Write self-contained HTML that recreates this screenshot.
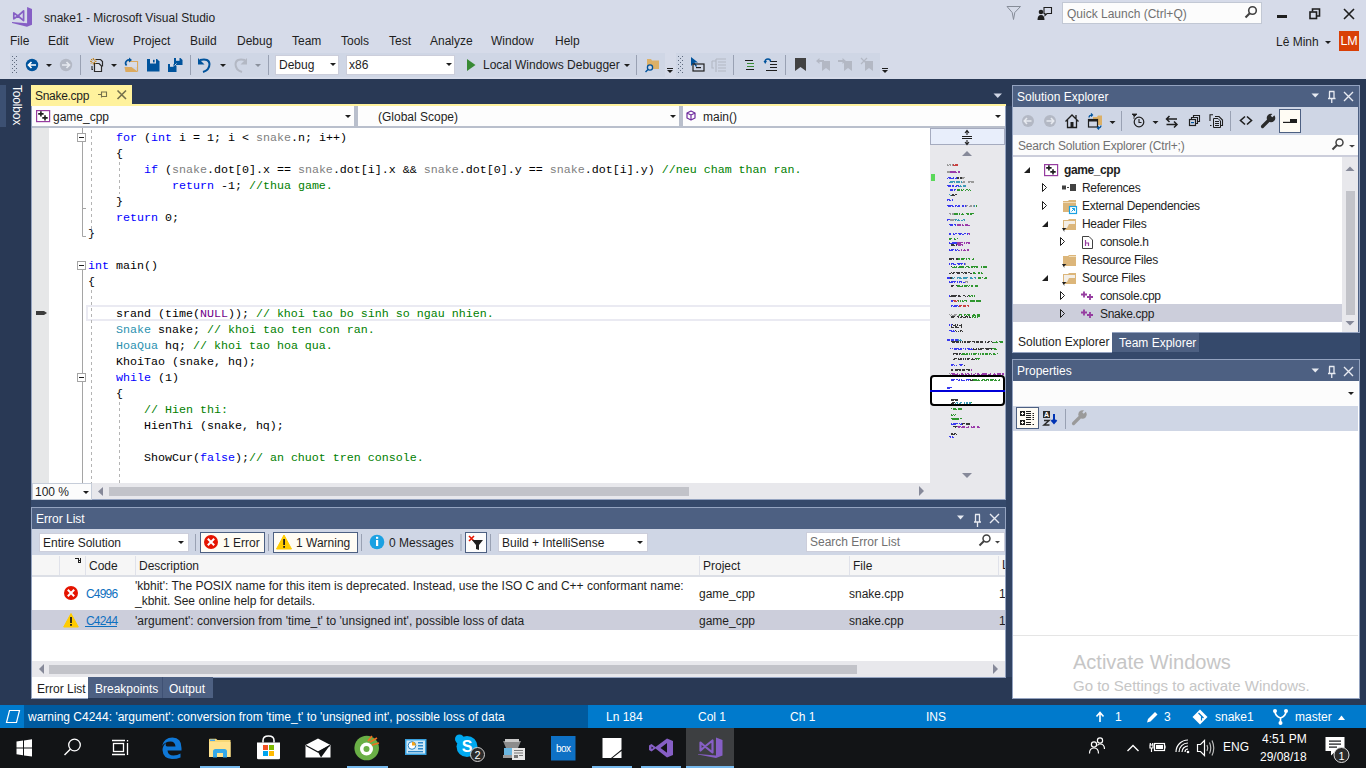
<!DOCTYPE html>
<html><head><meta charset="utf-8">
<style>
*{margin:0;padding:0;box-sizing:border-box}
html,body{width:1366px;height:768px;overflow:hidden}
body{position:relative;background:#293955;font-family:"Liberation Sans",sans-serif;font-size:12px;color:#1e1e1e}
.a{position:absolute}
.t{position:absolute;white-space:pre;line-height:1}
.mono{font-family:"Liberation Mono",monospace;font-size:11.667px}
svg{position:absolute;overflow:visible}
</style></head><body>
<!-- top chrome -->
<div class="a" id="chrome" style="left:0;top:0;width:1366px;height:79px;background:#d6dbe9"></div>
<div class="a" style="left:10px;top:53px;width:655px;height:24px;background:#cfd6e5"></div>
<div class="a" style="left:676px;top:53px;width:204px;height:24px;background:#cfd6e5"></div>


<!-- ===== TITLE ===== -->
<svg style="left:6px;top:2px" width="30" height="30" viewBox="0 0 30 30">
<path d="M21.1 4.9 L26 7.1 L26 22.8 L21 24.8 L6 20.9 L6 20.1 L21.1 21.3 Z" fill="#865fc5"/>
<path d="M7.8 10.9 L12 14 L17.6 8.9 L17.6 18.6 L12 14 L7.8 16.8 Z" fill="none" stroke="#865fc5" stroke-width="1.7" stroke-linejoin="round"/>
</svg>
<div class="t" style="left:44px;top:12px;font-size:12px;color:#1e1e1e">snake1 - Microsoft Visual Studio</div>
<!-- filter/feedback -->
<svg style="left:1006px;top:5px" width="16" height="16" viewBox="0 0 16 16"><path d="M1 1.5 H14.5 L8.8 7.5 L7.5 14.5 L6.2 7.5 Z" fill="none" stroke="#868c98" stroke-width="1"/></svg>
<svg style="left:1037px;top:6px" width="16" height="16" viewBox="0 0 16 16"><circle cx="4" cy="6" r="2.3" fill="#1e1e1e"/><path d="M0.5 14 Q0.5 9 4 9 Q7.5 9 7.5 14 Z" fill="#1e1e1e"/><path d="M7 1.5 H14.5 V7.5 H10 L8 9.5 V7.5 H7 Z" fill="none" stroke="#1e1e1e" stroke-width="1.1"/></svg>
<div class="a" style="left:1062px;top:2px;width:200px;height:22px;background:#fcfcfc;border:1px solid #c2c8d4"></div>
<div class="t" style="left:1067px;top:8px;color:#717171">Quick Launch (Ctrl+Q)</div>
<svg style="left:1244px;top:5px" width="14" height="14" viewBox="0 0 14 14"><circle cx="8.5" cy="5.5" r="3.8" fill="none" stroke="#424242" stroke-width="1.6"/><path d="M6 8 L1.5 12.5" stroke="#424242" stroke-width="2.2"/></svg>
<div class="a" style="left:1277px;top:15px;width:10px;height:3px;background:#1e1e1e"></div>
<svg style="left:1309px;top:8px" width="12" height="12" viewBox="0 0 12 12"><rect x="1" y="4" width="6.5" height="6.5" fill="none" stroke="#1e1e1e" stroke-width="1.6"/><path d="M3.5 3.5 V1 H10.5 V8 H8" fill="none" stroke="#1e1e1e" stroke-width="1.6"/></svg>
<svg style="left:1343px;top:8px" width="12" height="12" viewBox="0 0 12 12"><path d="M1 1 L11 11 M11 1 L1 11" stroke="#1e1e1e" stroke-width="1.6"/></svg>

<!-- ===== MENU ===== -->
<div class="t" style="left:10px;top:35px">File</div>
<div class="t" style="left:48px;top:35px">Edit</div>
<div class="t" style="left:88px;top:35px">View</div>
<div class="t" style="left:133px;top:35px">Project</div>
<div class="t" style="left:190px;top:35px">Build</div>
<div class="t" style="left:237px;top:35px">Debug</div>
<div class="t" style="left:292px;top:35px">Team</div>
<div class="t" style="left:341px;top:35px">Tools</div>
<div class="t" style="left:389px;top:35px">Test</div>
<div class="t" style="left:430px;top:35px">Analyze</div>
<div class="t" style="left:491px;top:35px">Window</div>
<div class="t" style="left:555px;top:35px">Help</div>
<div class="t" style="left:1276px;top:36px">Lê Minh</div>
<svg style="left:1325px;top:41px" width="6" height="4" viewBox="0 0 6 4"><path d="M0 0 H6 L3 3 Z" fill="#1e1e1e"/></svg>
<div class="a" style="left:1339px;top:31px;width:20px;height:20px;background:#d93f06"></div>
<div class="t" style="left:1339px;top:35px;width:20px;text-align:center;color:#fff;font-size:12.5px;letter-spacing:-0.3px">LM</div>

<!-- ===== TOOLBAR ===== -->
<svg style="left:0;top:0" width="1366" height="80" viewBox="0 0 1366 80">
<g fill="#5e6a7e">
<rect x="12" y="56" width="1" height="1"/><rect x="16" y="56" width="1" height="1"/><rect x="14" y="58" width="1" height="1"/>
<rect x="12" y="60" width="1" height="1"/><rect x="16" y="60" width="1" height="1"/><rect x="14" y="62" width="1" height="1"/>
<rect x="12" y="64" width="1" height="1"/><rect x="16" y="64" width="1" height="1"/><rect x="14" y="66" width="1" height="1"/>
<rect x="12" y="68" width="1" height="1"/><rect x="16" y="68" width="1" height="1"/><rect x="14" y="70" width="1" height="1"/>
<rect x="12" y="72" width="1" height="1"/><rect x="16" y="72" width="1" height="1"/>
</g>
<g fill="#5e6a7e">
<rect x="678" y="56" width="1" height="1"/><rect x="682" y="56" width="1" height="1"/><rect x="680" y="58" width="1" height="1"/>
<rect x="678" y="60" width="1" height="1"/><rect x="682" y="60" width="1" height="1"/><rect x="680" y="62" width="1" height="1"/>
<rect x="678" y="64" width="1" height="1"/><rect x="682" y="64" width="1" height="1"/><rect x="680" y="66" width="1" height="1"/>
<rect x="678" y="68" width="1" height="1"/><rect x="682" y="68" width="1" height="1"/><rect x="680" y="70" width="1" height="1"/>
<rect x="678" y="72" width="1" height="1"/><rect x="682" y="72" width="1" height="1"/>
</g>
<!-- back -->
<circle cx="32" cy="65" r="6.2" fill="#00539c"/>
<path d="M28.5 65 H36 M31.5 62 L28.5 65 L31.5 68" fill="none" stroke="#fff" stroke-width="1.7"/>
<path d="M46 64 H52 L49 67 Z" fill="#1e1e1e"/>
<circle cx="66" cy="65" r="6.2" fill="#b3b8c4"/>
<path d="M62 65 H69.5 M66.5 62 L69.5 65 L66.5 68" fill="none" stroke="#e6e9ef" stroke-width="1.7"/>
<rect x="80" y="55" width="1" height="20" fill="#99a1b3"/>
<!-- new project -->
<path d="M95.5 59.5 H100.5 L102.5 61.5 V66.5" fill="none" stroke="#2a2a2a" stroke-width="1.2"/>
<path d="M94.5 63.5 H99 L101.5 66 V71.5 H94.5 Z" fill="#dfe2ea" stroke="#2a2a2a" stroke-width="1.2"/>
<path d="M92 66 V69.5 H93" fill="none" stroke="#2a2a2a" stroke-width="1.1"/>
<g stroke="#c27d0e" stroke-width="1"><path d="M93.3 58 V64.5 M90 61.3 H96.5 M91 59 L95.6 63.6 M95.6 59 L91 63.6"/></g>
<circle cx="93.3" cy="61.3" r="1.3" fill="#cfd6e5"/>
<path d="M111 64 H117 L114 67 Z" fill="#1e1e1e"/>
<!-- open -->
<path d="M128.5 61.5 H137.5 V71.5" fill="none" stroke="#dcaa5e" stroke-width="1.2"/>
<rect x="128" y="62" width="9" height="5" fill="#d8dbe6"/>
<path d="M124.5 67 H131.5 L137.5 71.5 V72 H125.5 Z" fill="#dcaa5e"/>
<path d="M126.5 65.5 Q124.5 63 126.5 61 Q128 59.5 130 60" fill="none" stroke="#00539c" stroke-width="1.6"/>
<path d="M129 57.5 L132 60 L129 62.5 Z" fill="#00539c"/>
<!-- save -->
<path d="M147 59 H157 L159.5 61.5 V71.5 H147 Z" fill="#00539c"/>
<rect x="150" y="59" width="6" height="4.5" fill="#d8dbe6"/><rect x="153" y="59.8" width="1.6" height="2.6" fill="#00539c"/>
<!-- save all -->
<path d="M174 58 H180.5 L182.5 60 V65 H174 Z" fill="#00539c"/>
<rect x="176" y="58" width="3.5" height="2.8" fill="#d8dbe6"/>
<path d="M168 64 H174.5 L176.5 66 V72 H168 Z" fill="#00539c"/>
<rect x="170" y="64" width="3.5" height="2.8" fill="#d8dbe6"/>
<path d="M174.5 65.5 L176.5 63.5" stroke="#cfd6e5" stroke-width="1"/>
<rect x="190" y="55" width="1" height="20" fill="#99a1b3"/>
<!-- undo -->
<path d="M200 60 Q209 58 209.5 64 Q209.5 70 203 72" fill="none" stroke="#00539c" stroke-width="2"/>
<path d="M198 58 V64.5 H204.5 Z" fill="#00539c"/>
<path d="M220 64 H226 L223 67 Z" fill="#1e1e1e"/>
<path d="M245 60 Q236 58 235.5 64 Q235.5 70 242 72" fill="none" stroke="#b3b8c4" stroke-width="2"/>
<path d="M247 58 V64.5 H240.5 Z" fill="#b3b8c4"/>
<path d="M255 64 H261 L258 67 Z" fill="#8a909c"/>
<rect x="268" y="55" width="1" height="20" fill="#99a1b3"/>
<!-- play -->
<path d="M467 59 L475.5 65 L467 71 Z" fill="#388a34"/>
<path d="M624 64 H630 L627 67 Z" fill="#1e1e1e"/>
<rect x="636" y="55" width="1" height="20" fill="#99a1b3"/>
<!-- find in files -->
<path d="M647 59 H651 L652 60.5 H659 V69 H647 Z" fill="#dcb067"/>
<circle cx="650" cy="67.5" r="2.6" fill="#cfd6e5" stroke="#00539c" stroke-width="1.3"/>
<path d="M648 69.5 L645.5 72" stroke="#00539c" stroke-width="1.5"/>
<rect x="665" y="53" width="11" height="24" fill="#d6dbe9"/>
<rect x="667" y="68" width="6" height="1" fill="#1e1e1e"/><path d="M667 70 H673 L670 73 Z" fill="#1e1e1e"/>
<!-- step/breakpoint icons toolbar 2 -->
<path d="M691 57 L691 66 L693.5 63.5 L696 67 L697 66 L694.5 62.5 L698 62.5 Z" fill="#00539c"/>
<rect x="693" y="64" width="11" height="7" fill="none" stroke="#1e1e1e" stroke-width="1.2"/>
<rect x="696" y="67" width="5" height="1.2" fill="#1e1e1e"/>
<g fill="none" stroke="#b3b8c4" stroke-width="1.1"><path d="M712 61 H716 M712 61 V68 H714 M716 59 H726 M718 62 H726 M718 65 H726 M718 68 H726 M718 71 H726 M716 59 V72"/></g>
<rect x="733" y="55" width="1" height="20" fill="#99a1b3"/>
<!-- comment -->
<g stroke="#1e1e1e" stroke-width="1"><path d="M745 60.5 H753 M746 69.5 H754"/></g>
<g stroke="#388a34" stroke-width="1"><path d="M747 63.5 H754 M747 66.5 H754"/></g>
<g stroke="#1e1e1e" stroke-width="1"><path d="M770 61.5 H777 M770 64.5 H777 M770 67.5 H777 M766 70.5 H777"/></g>
<path d="M765 62 Q765 59 768 59 Q770.5 59 770.5 61.5" fill="none" stroke="#00539c" stroke-width="1.4"/>
<path d="M763.5 61 H767 L765.2 64 Z" fill="#00539c"/>
<rect x="785" y="55" width="1" height="20" fill="#99a1b3"/>
<!-- bookmark -->
<path d="M795 58 H806 V71 L800.5 67 L795 71 Z" fill="#424242"/>
<g fill="#b3b8c4">
<path d="M822 61 H830 V71 L826 68 L822 71 Z"/><path d="M816 61 L819.5 58 V60 H824 V62 H819.5 V64 Z"/>
<path d="M844 61 H852 V71 L848 68 L844 71 Z"/><path d="M846 61 L842.5 58 V60 H838 V62 H842.5 V64 Z"/>
<path d="M865 61 H873 V71 L869 68 L865 71 Z"/>
</g>
<path d="M861 58 L867 64 M867 58 L861 64" stroke="#b3b8c4" stroke-width="1.2"/>
<rect x="880" y="53" width="11" height="24" fill="#d6dbe9"/>
<rect x="882" y="68" width="6" height="1" fill="#1e1e1e"/><path d="M882 70 H888 L885 73 Z" fill="#1e1e1e"/>
</svg>
<div class="a" style="left:275px;top:55px;width:64px;height:20px;background:#fff;border:1px solid #cccedb"></div>
<div class="t" style="left:279px;top:59px">Debug</div>
<svg style="left:330px;top:63px" width="6" height="4" viewBox="0 0 6 4"><path d="M0 0 H6 L3 3 Z" fill="#1e1e1e"/></svg>
<div class="a" style="left:346px;top:55px;width:109px;height:20px;background:#fff;border:1px solid #cccedb"></div>
<div class="t" style="left:349px;top:59px">x86</div>
<svg style="left:446px;top:63px" width="6" height="4" viewBox="0 0 6 4"><path d="M0 0 H6 L3 3 Z" fill="#1e1e1e"/></svg>
<div class="t" style="left:483px;top:59px">Local Windows Debugger</div>

<!-- toolbox strip -->
<div class="a" style="left:0;top:85px;width:6px;height:42px;background:#3c5072"></div>

<!-- document tab -->
<div class="a" style="left:31px;top:85px;width:101px;height:21px;background:#fff29d"></div>
<div class="a" style="left:32px;top:104px;width:974px;height:2px;background:#fff29d"></div>
<!-- nav bar -->
<div class="a" style="left:32px;top:106px;width:974px;height:22px;background:#fdfdfd;border-bottom:2px solid #b9bfcc"></div>
<!-- editor -->
<div class="a" style="left:32px;top:128px;width:974px;height:356px;background:#fff"></div>
<div class="a" style="left:32px;top:128px;width:17px;height:356px;background:#e6e7e8"></div>
<div class="a" style="left:930px;top:128px;width:75px;height:356px;background:#e8e8ec"></div>


<!-- toolbox text -->
<div class="t" style="left:11px;top:85px;color:#fff;transform-origin:0 0;transform:translate(12px,0) rotate(90deg);font-size:12px;letter-spacing:-0.2px">Toolbox</div>
<!-- doc tab -->
<div class="t" style="left:35px;top:90px;color:#1e1e1e;letter-spacing:-0.3px">Snake.cpp</div>
<svg style="left:97px;top:90px" width="12" height="10" viewBox="0 0 12 10"><path d="M1 4.5 H4.5 M4.5 1.5 V7.5 M4.5 2 H9.5 V6.5 H4.5" fill="none" stroke="#75714c" stroke-width="1.1"/></svg>
<svg style="left:116px;top:89px" width="12" height="12" viewBox="0 0 12 12"><path d="M1.5 1.5 L10 10 M10 1.5 L1.5 10" stroke="#75714c" stroke-width="1.6"/></svg>
<svg style="left:993px;top:93px" width="10" height="6" viewBox="0 0 10 6"><path d="M0.5 0.5 H9 L4.75 5 Z" fill="#cfd6e5"/></svg>
<!-- nav bar content -->
<div class="a" style="left:354px;top:106px;width:4px;height:21px;background:#b9bfcc"></div>
<div class="a" style="left:679px;top:106px;width:4px;height:21px;background:#b9bfcc"></div>
<svg style="left:36px;top:110px" width="15" height="13" viewBox="0 0 15 13"><rect x="0.6" y="0.6" width="13" height="11" fill="#fff" stroke="#963ca0" stroke-width="1.2"/><path d="M2.2 3.9 H7.6 M4.9 1.2 V6.6 M6.3 7.9 H11.7 M9 5.2 V10.6" stroke="#1e1e1e" stroke-width="1.6"/></svg>
<div class="t" style="left:53px;top:111px">game_cpp</div>
<svg style="left:345px;top:115px" width="6" height="4" viewBox="0 0 6 4"><path d="M0 0 H6 L3 3 Z" fill="#1e1e1e"/></svg>
<div class="t" style="left:378px;top:111px">(Global Scope)</div>
<svg style="left:670px;top:115px" width="6" height="4" viewBox="0 0 6 4"><path d="M0 0 H6 L3 3 Z" fill="#1e1e1e"/></svg>
<svg style="left:686px;top:110px" width="10" height="11" viewBox="0 0 10 11"><path d="M5 1 L9 3 V8 L5 10 L1 8 V3 Z M1 3 L5 5 L9 3 M5 5 V10" fill="none" stroke="#6f2b9e" stroke-width="1.2" stroke-linejoin="round"/></svg>
<div class="t" style="left:703px;top:111px">main()</div>
<svg style="left:995px;top:115px" width="6" height="4" viewBox="0 0 6 4"><path d="M0 0 H6 L3 3 Z" fill="#1e1e1e"/></svg>

<!-- ===== EDITOR CONTENT ===== -->
<style>
.code{position:absolute;left:88px;top:130px;width:841px;height:354px;overflow:hidden;font-family:"Liberation Mono",monospace;font-size:11.667px;line-height:16px;white-space:pre;color:#000}
.k{color:#0000ff}.g{color:#808080}.c{color:#008000}.m{color:#6f008a}.ty{color:#2b91af}
</style>
<div class="a" style="left:86px;top:305px;width:844px;height:16px;border:2px solid #eaeaf2;border-right:none"></div>
<div class="code">    <span class="k">for</span> (<span class="k">int</span> i = 1; i &lt; <span class="g">snake</span>.n; i++)
    {
        <span class="k">if</span> (<span class="g">snake</span>.dot[0].x == <span class="g">snake</span>.dot[i].x &amp;&amp; <span class="g">snake</span>.dot[0].y == <span class="g">snake</span>.dot[i].y) <span class="c">//neu cham than ran.</span>
            <span class="k">return</span> -1; <span class="c">//thua game.</span>
    }
    <span class="k">return</span> 0;
}

<span class="k">int</span> main()
{

    srand (time(<span class="m">NULL</span>)); <span class="c">// khoi tao bo sinh so ngau nhien.</span>
    <span class="ty">Snake</span> snake; <span class="c">// khoi tao ten con ran.</span>
    <span class="ty">HoaQua</span> hq; <span class="c">// khoi tao hoa qua.</span>
    KhoiTao (snake, hq);
    <span class="k">while</span> (1)
    {
        <span class="c">// Hien thi:</span>
        HienThi (snake, hq);

        ShowCur(<span class="k">false</span>);<span class="c">// an chuot tren console.</span>
</div>
<svg style="left:0;top:0" width="1366" height="510" viewBox="0 0 1366 510">
<!-- outlining -->
<g fill="none" stroke="#a5a5a5" stroke-width="1">
<path d="M82.5 128 V133 M82.5 142 V236.5 H86 M82.5 208.5 H86"/>
<rect x="77.5" y="133.5" width="8" height="8" fill="#fff"/>
<path d="M79 137.5 H84" stroke="#1e1e1e"/>
<rect x="77.5" y="261.5" width="8" height="8" fill="#fff"/>
<path d="M79 265.5 H84" stroke="#1e1e1e"/>
<path d="M82.5 270 V373 M82.5 382 V483"/>
<rect x="77.5" y="373.5" width="8" height="8" fill="#fff"/>
<path d="M79 377.5 H84" stroke="#1e1e1e"/>
</g>
<g stroke="#b4b4b4" stroke-width="1" stroke-dasharray="3,3">
<path d="M91.5 130 V234"/><path d="M119.5 162 V194"/>
<path d="M91.5 290 V483"/><path d="M119.5 402 V483"/>
</g>
<!-- glyph marker -->
<path d="M36 311 H44 L47 313 L44 315 H36 Z" fill="#3c3c3c"/>
</svg>

<!-- h scroll -->
<div class="a" style="left:32px;top:483px;width:973px;height:17px;background:#e8e8ec"></div>
<div class="a" style="left:31px;top:106px;width:1px;height:394px;background:#94a3c0"></div>
<div class="a" style="left:1005px;top:106px;width:1px;height:394px;background:#94a3c0"></div>
<div class="a" style="left:31px;top:499px;width:975px;height:1px;background:#94a3c0"></div>


<!-- ===== MINIMAP / SCROLLBARS ===== -->
<svg style="left:0;top:0" width="1366" height="510" viewBox="0 0 1366 510">
<rect x="930.5" y="128.5" width="74" height="16" fill="#e8eefb" stroke="#a5abbf" stroke-width="1"/>
<path d="M962 136.5 H972 M962 138.5 H972" stroke="#1e1e1e" stroke-width="1.2"/>
<path d="M967 131 V135 M967 140 V144 M965 133 L967 130.5 L969 133 M965 142 L967 144.5 L969 142" fill="none" stroke="#1e1e1e" stroke-width="1.1"/>
<path d="M962 156 L967 151 L972 156 Z" fill="#868999"/>
<path d="M962 473 H972 L967 478 Z" fill="#868999"/>
<rect x="931" y="174" width="4" height="7" fill="#5ad85a"/>
<rect x="931" y="376" width="73" height="29" rx="3" fill="#fff" stroke="#000" stroke-width="2"/>
<g opacity="1"><path d="M947 164h1v1h-1zM947 165h1v1h-1zM948 165h1v1h-1zM949 164h1v1h-1zM950 164h1v1h-1zM950 165h1v1h-1zM952 164h1v1h-1zM952 165h1v1h-1zM947 171h1v1h-1zM947 172h1v1h-1zM948 171h1v1h-1zM948 172h1v1h-1zM949 171h1v1h-1zM949 172h1v1h-1zM962 177h1v1h-1zM962 178h1v1h-1zM963 177h1v1h-1zM963 178h1v1h-1zM964 177h1v1h-1zM962 182h1v1h-1zM963 181h1v1h-1zM963 182h1v1h-1zM964 181h1v1h-1zM964 182h1v1h-1zM968 181h1v1h-1zM968 182h1v1h-1zM969 181h1v1h-1zM969 182h1v1h-1zM970 181h1v1h-1zM971 181h1v1h-1zM971 182h1v1h-1zM972 181h1v1h-1zM972 182h1v1h-1zM973 181h1v1h-1zM973 182h1v1h-1zM966 205h1v1h-1zM966 206h1v1h-1zM967 205h1v1h-1zM969 206h1v1h-1zM970 205h1v1h-1zM970 206h1v1h-1zM971 205h1v1h-1zM971 206h1v1h-1zM973 205h1v1h-1zM973 206h1v1h-1zM949 213h1v1h-1zM950 213h1v1h-1zM950 214h1v1h-1zM952 213h1v1h-1zM952 214h1v1h-1zM953 213h1v1h-1zM953 214h1v1h-1zM950 219h1v1h-1zM950 220h1v1h-1zM951 219h1v1h-1zM951 220h1v1h-1zM952 219h1v1h-1zM952 220h1v1h-1zM953 219h1v1h-1zM953 220h1v1h-1zM954 219h1v1h-1zM965 263h1v1h-1zM965 264h1v1h-1zM965 281h1v1h-1zM965 282h1v1h-1zM966 281h1v1h-1zM967 281h1v1h-1zM967 282h1v1h-1zM949 314h1v1h-1zM950 315h1v1h-1zM951 314h1v1h-1zM952 315h1v1h-1zM953 315h1v1h-1zM954 314h1v1h-1zM954 315h1v1h-1zM955 314h1v1h-1zM955 315h1v1h-1zM956 314h1v1h-1zM958 315h1v1h-1zM949 373h1v1h-1zM950 374h1v1h-1z" fill="#9a9a9a"/><path d="M953 164h1v1h-1zM953 165h1v1h-1zM954 165h1v1h-1zM955 164h1v1h-1zM955 165h1v1h-1zM956 164h1v1h-1zM956 165h1v1h-1zM957 164h1v1h-1zM957 165h1v1h-1zM953 300h1v1h-1zM954 300h1v1h-1zM954 301h1v1h-1zM955 300h1v1h-1zM955 301h1v1h-1zM956 301h1v1h-1zM957 300h1v1h-1zM959 305h1v1h-1zM959 306h1v1h-1zM960 305h1v1h-1zM960 306h1v1h-1zM961 305h1v1h-1zM963 305h1v1h-1zM963 306h1v1h-1zM964 305h1v1h-1zM964 306h1v1h-1zM965 305h1v1h-1zM965 306h1v1h-1zM967 305h1v1h-1zM968 305h1v1h-1zM968 306h1v1h-1z" fill="#c84040"/><path d="M950 171h1v1h-1zM950 172h1v1h-1zM951 171h1v1h-1zM951 172h1v1h-1zM952 171h1v1h-1zM952 172h1v1h-1zM953 171h1v1h-1zM953 172h1v1h-1zM954 171h1v1h-1zM954 172h1v1h-1zM955 171h1v1h-1zM955 172h1v1h-1zM956 172h1v1h-1zM958 171h1v1h-1zM958 172h1v1h-1zM959 171h1v1h-1zM959 172h1v1h-1zM957 224h1v1h-1zM957 225h1v1h-1zM958 224h1v1h-1zM958 225h1v1h-1zM959 224h1v1h-1zM959 225h1v1h-1zM960 224h1v1h-1zM960 225h1v1h-1zM962 224h1v1h-1zM962 225h1v1h-1zM963 225h1v1h-1zM965 224h1v1h-1zM965 225h1v1h-1zM966 224h1v1h-1zM966 225h1v1h-1zM967 224h1v1h-1zM967 225h1v1h-1zM968 225h1v1h-1zM969 225h1v1h-1zM968 233h1v1h-1zM969 233h1v1h-1zM969 234h1v1h-1zM957 242h1v1h-1zM957 243h1v1h-1zM958 242h1v1h-1zM958 243h1v1h-1zM959 242h1v1h-1zM959 243h1v1h-1zM960 242h1v1h-1zM960 243h1v1h-1zM961 242h1v1h-1zM962 242h1v1h-1zM964 242h1v1h-1zM964 243h1v1h-1zM966 242h1v1h-1zM966 243h1v1h-1zM967 242h1v1h-1zM968 242h1v1h-1zM968 243h1v1h-1zM969 242h1v1h-1zM969 243h1v1h-1zM957 244h1v1h-1zM958 244h1v1h-1zM958 245h1v1h-1zM959 244h1v1h-1zM959 245h1v1h-1zM960 244h1v1h-1zM960 245h1v1h-1zM961 244h1v1h-1zM962 244h1v1h-1zM962 245h1v1h-1zM959 250h1v1h-1zM961 249h1v1h-1zM961 250h1v1h-1zM963 250h1v1h-1zM964 249h1v1h-1zM964 250h1v1h-1zM965 250h1v1h-1zM967 249h1v1h-1zM967 250h1v1h-1zM968 249h1v1h-1zM968 250h1v1h-1zM971 369h1v1h-1zM971 370h1v1h-1zM951 373h1v1h-1zM952 373h1v1h-1zM952 374h1v1h-1zM953 373h1v1h-1zM953 374h1v1h-1zM954 373h1v1h-1zM954 374h1v1h-1zM955 374h1v1h-1zM956 374h1v1h-1zM957 373h1v1h-1zM957 374h1v1h-1zM959 374h1v1h-1zM961 373h1v1h-1zM961 374h1v1h-1zM962 373h1v1h-1zM962 374h1v1h-1zM963 374h1v1h-1zM965 373h1v1h-1zM965 374h1v1h-1zM966 374h1v1h-1zM967 373h1v1h-1zM968 373h1v1h-1zM968 374h1v1h-1zM969 374h1v1h-1zM971 373h1v1h-1zM971 374h1v1h-1zM973 374h1v1h-1zM974 374h1v1h-1zM975 373h1v1h-1zM977 373h1v1h-1zM977 374h1v1h-1zM978 373h1v1h-1zM978 374h1v1h-1zM979 374h1v1h-1zM981 374h1v1h-1zM982 373h1v1h-1zM982 374h1v1h-1zM983 373h1v1h-1zM983 374h1v1h-1zM984 373h1v1h-1zM984 374h1v1h-1zM985 373h1v1h-1zM985 374h1v1h-1zM986 373h1v1h-1zM986 374h1v1h-1zM988 374h1v1h-1zM989 374h1v1h-1zM990 373h1v1h-1zM990 374h1v1h-1zM993 374h1v1h-1zM994 373h1v1h-1zM994 374h1v1h-1zM995 374h1v1h-1zM997 373h1v1h-1zM997 374h1v1h-1zM998 373h1v1h-1zM998 374h1v1h-1zM999 373h1v1h-1zM999 374h1v1h-1zM1000 373h1v1h-1zM1000 374h1v1h-1zM1002 373h1v1h-1zM1002 374h1v1h-1zM1003 373h1v1h-1zM1003 374h1v1h-1zM957 426h1v1h-1zM958 426h1v1h-1zM958 427h1v1h-1zM959 426h1v1h-1zM959 427h1v1h-1zM960 426h1v1h-1zM961 427h1v1h-1zM962 426h1v1h-1zM962 427h1v1h-1zM963 426h1v1h-1zM963 427h1v1h-1zM964 426h1v1h-1zM964 427h1v1h-1zM966 427h1v1h-1zM967 427h1v1h-1zM968 426h1v1h-1zM968 427h1v1h-1zM971 426h1v1h-1zM971 427h1v1h-1zM972 427h1v1h-1zM973 426h1v1h-1zM973 427h1v1h-1zM974 426h1v1h-1zM974 427h1v1h-1zM977 426h1v1h-1zM977 427h1v1h-1zM978 426h1v1h-1zM978 427h1v1h-1zM979 427h1v1h-1z" fill="#9a3aaa"/><path d="M947 178h1v1h-1zM948 177h1v1h-1zM949 177h1v1h-1zM949 178h1v1h-1zM950 177h1v1h-1zM950 178h1v1h-1zM951 178h1v1h-1zM952 178h1v1h-1zM953 177h1v1h-1zM953 178h1v1h-1zM955 178h1v1h-1zM956 177h1v1h-1zM956 178h1v1h-1zM947 185h1v1h-1zM948 185h1v1h-1zM948 186h1v1h-1zM949 185h1v1h-1zM949 186h1v1h-1zM950 185h1v1h-1zM950 186h1v1h-1zM952 185h1v1h-1zM952 186h1v1h-1zM953 185h1v1h-1zM953 186h1v1h-1zM955 186h1v1h-1zM956 185h1v1h-1zM956 186h1v1h-1zM957 185h1v1h-1zM958 185h1v1h-1zM958 186h1v1h-1zM950 189h1v1h-1zM950 190h1v1h-1zM951 189h1v1h-1zM951 190h1v1h-1zM952 189h1v1h-1zM952 190h1v1h-1zM954 189h1v1h-1zM954 190h1v1h-1zM955 189h1v1h-1zM947 199h1v1h-1zM947 200h1v1h-1zM948 199h1v1h-1zM949 199h1v1h-1zM949 200h1v1h-1zM950 200h1v1h-1zM952 199h1v1h-1zM952 200h1v1h-1zM947 205h1v1h-1zM948 205h1v1h-1zM948 206h1v1h-1zM949 205h1v1h-1zM949 206h1v1h-1zM950 205h1v1h-1zM950 206h1v1h-1zM951 205h1v1h-1zM952 205h1v1h-1zM952 206h1v1h-1zM953 206h1v1h-1zM955 205h1v1h-1zM955 206h1v1h-1zM956 205h1v1h-1zM957 206h1v1h-1zM958 205h1v1h-1zM958 206h1v1h-1zM959 205h1v1h-1zM959 206h1v1h-1zM962 205h1v1h-1zM962 206h1v1h-1zM963 205h1v1h-1zM963 206h1v1h-1zM965 205h1v1h-1zM965 206h1v1h-1zM947 219h1v1h-1zM947 220h1v1h-1zM948 219h1v1h-1zM949 219h1v1h-1zM949 224h1v1h-1zM950 224h1v1h-1zM950 225h1v1h-1zM951 224h1v1h-1zM951 225h1v1h-1zM952 224h1v1h-1zM952 225h1v1h-1zM954 224h1v1h-1zM955 224h1v1h-1zM955 225h1v1h-1zM949 233h1v1h-1zM949 234h1v1h-1zM950 233h1v1h-1zM950 234h1v1h-1zM953 233h1v1h-1zM953 234h1v1h-1zM954 234h1v1h-1zM955 233h1v1h-1zM956 233h1v1h-1zM958 233h1v1h-1zM959 233h1v1h-1zM959 234h1v1h-1zM960 233h1v1h-1zM960 234h1v1h-1zM961 233h1v1h-1zM962 234h1v1h-1zM963 234h1v1h-1zM964 233h1v1h-1zM965 233h1v1h-1zM967 233h1v1h-1zM967 234h1v1h-1zM949 242h1v1h-1zM949 243h1v1h-1zM950 243h1v1h-1zM951 243h1v1h-1zM952 242h1v1h-1zM952 243h1v1h-1zM953 242h1v1h-1zM953 243h1v1h-1zM954 242h1v1h-1zM954 243h1v1h-1zM955 242h1v1h-1zM955 243h1v1h-1zM956 242h1v1h-1zM956 243h1v1h-1zM949 249h1v1h-1zM949 250h1v1h-1zM950 250h1v1h-1zM951 249h1v1h-1zM951 250h1v1h-1zM952 249h1v1h-1zM952 250h1v1h-1zM953 249h1v1h-1zM955 249h1v1h-1zM955 250h1v1h-1zM956 250h1v1h-1zM957 249h1v1h-1zM958 250h1v1h-1zM949 263h1v1h-1zM949 264h1v1h-1zM951 263h1v1h-1zM951 264h1v1h-1zM952 263h1v1h-1zM953 263h1v1h-1zM953 264h1v1h-1zM954 264h1v1h-1zM955 264h1v1h-1zM957 263h1v1h-1zM958 263h1v1h-1zM958 264h1v1h-1zM959 263h1v1h-1zM959 264h1v1h-1zM960 263h1v1h-1zM961 263h1v1h-1zM961 264h1v1h-1zM962 263h1v1h-1zM964 263h1v1h-1zM964 264h1v1h-1zM947 277h1v1h-1zM947 278h1v1h-1zM948 277h1v1h-1zM948 278h1v1h-1zM949 277h1v1h-1zM949 278h1v1h-1zM949 281h1v1h-1zM949 282h1v1h-1zM950 282h1v1h-1zM951 281h1v1h-1zM951 282h1v1h-1zM952 281h1v1h-1zM952 282h1v1h-1zM953 281h1v1h-1zM954 281h1v1h-1zM954 282h1v1h-1zM955 281h1v1h-1zM957 281h1v1h-1zM957 282h1v1h-1zM959 281h1v1h-1zM959 282h1v1h-1zM960 281h1v1h-1zM961 281h1v1h-1zM961 282h1v1h-1zM963 282h1v1h-1zM964 282h1v1h-1zM949 295h1v1h-1zM949 296h1v1h-1zM951 300h1v1h-1zM951 301h1v1h-1zM952 300h1v1h-1zM952 301h1v1h-1zM951 305h1v1h-1zM951 306h1v1h-1zM952 305h1v1h-1zM953 306h1v1h-1zM954 305h1v1h-1zM954 306h1v1h-1zM955 305h1v1h-1zM955 306h1v1h-1zM956 305h1v1h-1zM956 306h1v1h-1zM957 305h1v1h-1zM958 306h1v1h-1zM949 324h1v1h-1zM949 325h1v1h-1zM951 324h1v1h-1zM951 325h1v1h-1zM949 330h1v1h-1zM950 330h1v1h-1zM951 330h1v1h-1zM951 331h1v1h-1zM952 331h1v1h-1zM953 330h1v1h-1zM953 331h1v1h-1zM954 331h1v1h-1zM947 339h1v1h-1zM947 340h1v1h-1zM948 339h1v1h-1zM948 340h1v1h-1zM949 339h1v1h-1zM949 340h1v1h-1zM951 339h1v1h-1zM951 340h1v1h-1zM952 339h1v1h-1zM952 340h1v1h-1zM953 339h1v1h-1zM953 340h1v1h-1zM955 339h1v1h-1zM955 340h1v1h-1zM956 339h1v1h-1zM956 340h1v1h-1zM957 339h1v1h-1zM957 340h1v1h-1zM950 348h1v1h-1zM952 348h1v1h-1zM954 348h1v1h-1zM954 349h1v1h-1zM955 348h1v1h-1zM955 349h1v1h-1zM956 348h1v1h-1zM956 349h1v1h-1zM957 348h1v1h-1zM958 348h1v1h-1zM958 349h1v1h-1zM959 349h1v1h-1zM960 348h1v1h-1zM960 349h1v1h-1zM961 348h1v1h-1zM961 349h1v1h-1zM963 348h1v1h-1zM965 348h1v1h-1zM965 349h1v1h-1zM967 348h1v1h-1zM968 348h1v1h-1zM968 349h1v1h-1zM969 348h1v1h-1zM969 349h1v1h-1zM970 349h1v1h-1zM971 348h1v1h-1zM971 349h1v1h-1zM972 349h1v1h-1zM951 364h1v1h-1zM951 365h1v1h-1zM952 364h1v1h-1zM952 365h1v1h-1zM953 364h1v1h-1zM954 365h1v1h-1zM956 365h1v1h-1zM959 364h1v1h-1zM960 364h1v1h-1zM960 365h1v1h-1zM961 364h1v1h-1zM961 365h1v1h-1zM962 364h1v1h-1zM951 379h1v1h-1zM951 380h1v1h-1zM952 379h1v1h-1zM952 380h1v1h-1zM953 379h1v1h-1zM953 380h1v1h-1zM954 379h1v1h-1zM956 379h1v1h-1zM957 379h1v1h-1zM958 380h1v1h-1zM959 379h1v1h-1zM959 380h1v1h-1zM961 379h1v1h-1zM961 380h1v1h-1zM962 380h1v1h-1zM963 380h1v1h-1zM964 380h1v1h-1zM966 379h1v1h-1zM966 380h1v1h-1zM967 379h1v1h-1zM968 379h1v1h-1zM968 380h1v1h-1zM969 379h1v1h-1zM947 387h1v1h-1zM947 388h1v1h-1zM948 387h1v1h-1zM948 388h1v1h-1zM949 387h1v1h-1zM949 388h1v1h-1zM950 387h1v1h-1zM951 387h1v1h-1zM951 423h1v1h-1zM951 424h1v1h-1zM952 424h1v1h-1zM953 423h1v1h-1zM953 424h1v1h-1zM954 423h1v1h-1zM954 424h1v1h-1zM955 423h1v1h-1zM955 424h1v1h-1zM956 423h1v1h-1zM957 423h1v1h-1zM959 423h1v1h-1zM960 424h1v1h-1zM961 423h1v1h-1zM961 424h1v1h-1zM949 436h1v1h-1zM950 436h1v1h-1zM950 437h1v1h-1zM952 436h1v1h-1zM952 437h1v1h-1zM953 437h1v1h-1z" fill="#3a3af0"/><path d="M957 177h1v1h-1zM957 178h1v1h-1zM958 177h1v1h-1zM958 178h1v1h-1zM960 177h1v1h-1zM960 178h1v1h-1zM961 177h1v1h-1zM961 178h1v1h-1zM951 195h1v1h-1zM952 194h1v1h-1zM952 195h1v1h-1zM953 194h1v1h-1zM953 195h1v1h-1zM954 195h1v1h-1zM955 194h1v1h-1zM956 194h1v1h-1zM951 244h1v1h-1zM951 245h1v1h-1zM952 244h1v1h-1zM952 245h1v1h-1zM953 244h1v1h-1zM953 245h1v1h-1zM954 245h1v1h-1zM956 244h1v1h-1zM956 245h1v1h-1zM949 258h1v1h-1zM949 259h1v1h-1zM950 258h1v1h-1zM950 259h1v1h-1zM951 258h1v1h-1zM951 259h1v1h-1zM952 258h1v1h-1zM953 258h1v1h-1zM953 259h1v1h-1zM956 258h1v1h-1zM956 259h1v1h-1zM957 258h1v1h-1zM957 259h1v1h-1zM951 266h1v1h-1zM949 273h1v1h-1zM950 273h1v1h-1zM951 272h1v1h-1zM952 273h1v1h-1zM953 272h1v1h-1zM953 273h1v1h-1zM954 272h1v1h-1zM956 272h1v1h-1zM957 272h1v1h-1zM957 273h1v1h-1zM958 272h1v1h-1zM958 273h1v1h-1zM959 272h1v1h-1zM959 273h1v1h-1zM961 272h1v1h-1zM962 272h1v1h-1zM963 273h1v1h-1zM964 272h1v1h-1zM965 272h1v1h-1zM965 273h1v1h-1zM966 272h1v1h-1zM966 273h1v1h-1zM968 272h1v1h-1zM969 272h1v1h-1zM970 273h1v1h-1zM971 273h1v1h-1zM950 277h1v1h-1zM950 278h1v1h-1zM951 277h1v1h-1zM951 278h1v1h-1zM951 285h1v1h-1zM951 286h1v1h-1zM952 285h1v1h-1zM952 286h1v1h-1zM953 285h1v1h-1zM956 285h1v1h-1zM950 296h1v1h-1zM951 295h1v1h-1zM951 296h1v1h-1zM952 295h1v1h-1zM952 296h1v1h-1zM953 295h1v1h-1zM953 296h1v1h-1zM954 295h1v1h-1zM954 296h1v1h-1zM955 295h1v1h-1zM955 296h1v1h-1zM956 295h1v1h-1zM958 295h1v1h-1zM958 296h1v1h-1zM959 295h1v1h-1zM959 296h1v1h-1zM960 296h1v1h-1zM963 295h1v1h-1zM964 295h1v1h-1zM965 296h1v1h-1zM967 296h1v1h-1zM968 295h1v1h-1zM951 316h1v1h-1zM951 317h1v1h-1zM952 316h1v1h-1zM952 317h1v1h-1zM953 316h1v1h-1zM953 317h1v1h-1zM954 316h1v1h-1zM957 316h1v1h-1zM958 316h1v1h-1zM958 317h1v1h-1zM960 317h1v1h-1zM961 316h1v1h-1zM961 317h1v1h-1zM962 316h1v1h-1zM963 317h1v1h-1zM964 317h1v1h-1zM965 316h1v1h-1zM965 317h1v1h-1zM966 316h1v1h-1zM967 316h1v1h-1zM967 317h1v1h-1zM969 316h1v1h-1zM969 317h1v1h-1zM970 317h1v1h-1zM952 324h1v1h-1zM953 325h1v1h-1zM954 325h1v1h-1zM955 324h1v1h-1zM955 325h1v1h-1zM957 324h1v1h-1zM957 325h1v1h-1zM959 325h1v1h-1zM960 325h1v1h-1zM961 324h1v1h-1zM961 325h1v1h-1zM951 326h1v1h-1zM951 327h1v1h-1zM952 327h1v1h-1zM953 327h1v1h-1zM955 326h1v1h-1zM955 327h1v1h-1zM956 326h1v1h-1zM956 327h1v1h-1zM957 327h1v1h-1zM958 327h1v1h-1zM961 326h1v1h-1zM961 327h1v1h-1zM955 330h1v1h-1zM956 331h1v1h-1zM958 331h1v1h-1zM960 330h1v1h-1zM960 331h1v1h-1zM961 330h1v1h-1zM962 331h1v1h-1zM951 341h1v1h-1zM952 341h1v1h-1zM952 342h1v1h-1zM953 341h1v1h-1zM953 342h1v1h-1zM954 341h1v1h-1zM954 342h1v1h-1zM955 341h1v1h-1zM956 341h1v1h-1zM956 342h1v1h-1zM957 341h1v1h-1zM957 342h1v1h-1zM958 341h1v1h-1zM958 342h1v1h-1zM960 341h1v1h-1zM960 342h1v1h-1zM962 341h1v1h-1zM962 342h1v1h-1zM964 341h1v1h-1zM964 342h1v1h-1zM965 341h1v1h-1zM965 342h1v1h-1zM967 341h1v1h-1zM967 342h1v1h-1zM968 341h1v1h-1zM968 342h1v1h-1zM969 341h1v1h-1zM969 342h1v1h-1zM970 341h1v1h-1zM972 341h1v1h-1zM973 341h1v1h-1zM974 341h1v1h-1zM974 342h1v1h-1zM976 341h1v1h-1zM976 342h1v1h-1zM977 341h1v1h-1zM977 342h1v1h-1zM978 341h1v1h-1zM978 342h1v1h-1zM980 341h1v1h-1zM980 342h1v1h-1zM981 341h1v1h-1zM981 342h1v1h-1zM982 341h1v1h-1zM982 342h1v1h-1zM985 341h1v1h-1zM985 342h1v1h-1zM987 342h1v1h-1zM988 341h1v1h-1zM988 342h1v1h-1zM989 341h1v1h-1zM991 341h1v1h-1zM992 342h1v1h-1zM973 348h1v1h-1zM973 349h1v1h-1zM974 349h1v1h-1zM975 349h1v1h-1zM976 348h1v1h-1zM976 349h1v1h-1zM978 348h1v1h-1zM978 349h1v1h-1zM979 349h1v1h-1zM980 348h1v1h-1zM980 349h1v1h-1zM981 348h1v1h-1zM981 349h1v1h-1zM982 348h1v1h-1zM983 348h1v1h-1zM985 348h1v1h-1zM986 348h1v1h-1zM986 349h1v1h-1zM987 348h1v1h-1zM987 349h1v1h-1zM988 348h1v1h-1zM988 349h1v1h-1zM989 348h1v1h-1zM990 348h1v1h-1zM991 348h1v1h-1zM991 349h1v1h-1zM953 353h1v1h-1zM953 354h1v1h-1zM954 353h1v1h-1zM955 353h1v1h-1zM956 353h1v1h-1zM956 354h1v1h-1zM957 353h1v1h-1zM957 354h1v1h-1zM959 353h1v1h-1zM959 354h1v1h-1zM960 353h1v1h-1zM953 359h1v1h-1zM954 358h1v1h-1zM954 359h1v1h-1zM955 358h1v1h-1zM956 358h1v1h-1zM958 358h1v1h-1zM958 359h1v1h-1zM959 359h1v1h-1zM960 358h1v1h-1zM960 359h1v1h-1zM961 358h1v1h-1zM961 359h1v1h-1zM963 358h1v1h-1zM963 359h1v1h-1zM965 358h1v1h-1zM965 359h1v1h-1zM967 358h1v1h-1zM967 359h1v1h-1zM968 358h1v1h-1zM968 359h1v1h-1zM969 358h1v1h-1zM971 359h1v1h-1zM972 358h1v1h-1zM972 359h1v1h-1zM973 359h1v1h-1zM974 359h1v1h-1zM975 358h1v1h-1zM964 365h1v1h-1zM951 369h1v1h-1zM951 370h1v1h-1zM952 369h1v1h-1zM952 370h1v1h-1zM955 369h1v1h-1zM955 370h1v1h-1zM956 369h1v1h-1zM956 370h1v1h-1zM957 369h1v1h-1zM957 370h1v1h-1zM958 369h1v1h-1zM959 369h1v1h-1zM959 370h1v1h-1zM960 369h1v1h-1zM960 370h1v1h-1zM962 369h1v1h-1zM962 370h1v1h-1zM963 369h1v1h-1zM963 370h1v1h-1zM964 369h1v1h-1zM964 370h1v1h-1zM966 369h1v1h-1zM967 369h1v1h-1zM968 369h1v1h-1zM968 370h1v1h-1zM969 369h1v1h-1zM969 370h1v1h-1zM970 379h1v1h-1zM970 380h1v1h-1zM971 380h1v1h-1zM972 379h1v1h-1zM972 380h1v1h-1zM951 399h1v1h-1zM951 400h1v1h-1zM952 399h1v1h-1zM952 400h1v1h-1zM953 399h1v1h-1zM953 400h1v1h-1zM954 399h1v1h-1zM955 399h1v1h-1zM955 400h1v1h-1zM956 399h1v1h-1zM956 400h1v1h-1zM957 399h1v1h-1zM957 400h1v1h-1zM951 403h1v1h-1zM952 402h1v1h-1zM952 403h1v1h-1zM953 402h1v1h-1zM953 403h1v1h-1zM954 402h1v1h-1zM962 423h1v1h-1zM962 424h1v1h-1zM963 423h1v1h-1zM964 423h1v1h-1zM966 423h1v1h-1zM966 424h1v1h-1zM967 423h1v1h-1zM967 424h1v1h-1zM968 423h1v1h-1zM968 424h1v1h-1zM969 423h1v1h-1zM969 424h1v1h-1zM953 426h1v1h-1zM954 426h1v1h-1zM955 426h1v1h-1zM955 427h1v1h-1zM956 426h1v1h-1zM951 433h1v1h-1zM951 434h1v1h-1zM952 433h1v1h-1zM952 434h1v1h-1zM953 434h1v1h-1zM954 433h1v1h-1zM954 434h1v1h-1zM955 433h1v1h-1zM956 434h1v1h-1z" fill="#383838"/><path d="M949 182h1v1h-1zM950 181h1v1h-1zM950 182h1v1h-1zM951 181h1v1h-1zM951 182h1v1h-1zM952 181h1v1h-1zM952 182h1v1h-1zM953 181h1v1h-1zM954 181h1v1h-1zM954 182h1v1h-1zM956 181h1v1h-1zM956 182h1v1h-1zM957 181h1v1h-1zM957 182h1v1h-1zM958 181h1v1h-1zM958 182h1v1h-1zM959 181h1v1h-1zM959 182h1v1h-1zM961 181h1v1h-1zM961 182h1v1h-1zM959 186h1v1h-1zM960 185h1v1h-1zM960 186h1v1h-1zM961 186h1v1h-1zM963 185h1v1h-1zM963 186h1v1h-1zM964 185h1v1h-1zM964 186h1v1h-1zM965 185h1v1h-1zM965 186h1v1h-1zM949 194h1v1h-1zM950 195h1v1h-1zM974 205h1v1h-1zM974 206h1v1h-1zM955 219h1v1h-1zM955 220h1v1h-1zM956 219h1v1h-1zM957 220h1v1h-1zM958 219h1v1h-1zM958 220h1v1h-1zM959 220h1v1h-1zM961 220h1v1h-1zM962 220h1v1h-1zM963 219h1v1h-1zM964 219h1v1h-1zM964 220h1v1h-1zM952 277h1v1h-1zM952 278h1v1h-1zM953 278h1v1h-1zM954 277h1v1h-1zM957 277h1v1h-1zM957 278h1v1h-1zM958 277h1v1h-1zM959 277h1v1h-1zM959 278h1v1h-1zM960 277h1v1h-1zM960 278h1v1h-1zM961 278h1v1h-1zM963 277h1v1h-1zM963 278h1v1h-1zM964 277h1v1h-1zM964 278h1v1h-1zM965 277h1v1h-1zM965 278h1v1h-1zM966 277h1v1h-1zM966 278h1v1h-1zM967 277h1v1h-1zM970 277h1v1h-1zM970 278h1v1h-1zM971 277h1v1h-1zM971 278h1v1h-1zM972 278h1v1h-1zM974 277h1v1h-1zM975 277h1v1h-1zM975 278h1v1h-1zM958 339h1v1h-1zM958 340h1v1h-1zM959 340h1v1h-1zM960 339h1v1h-1zM960 340h1v1h-1zM961 340h1v1h-1zM955 403h1v1h-1zM956 402h1v1h-1zM957 402h1v1h-1zM957 403h1v1h-1zM959 403h1v1h-1zM960 402h1v1h-1zM960 403h1v1h-1zM961 402h1v1h-1zM964 402h1v1h-1zM964 403h1v1h-1zM966 402h1v1h-1zM966 403h1v1h-1zM967 402h1v1h-1zM967 403h1v1h-1zM969 402h1v1h-1zM969 403h1v1h-1zM970 402h1v1h-1zM970 403h1v1h-1z" fill="#3a9ab8"/><path d="M957 189h1v1h-1zM957 190h1v1h-1zM958 189h1v1h-1zM958 190h1v1h-1zM959 189h1v1h-1zM959 190h1v1h-1zM961 189h1v1h-1zM961 190h1v1h-1zM962 190h1v1h-1zM963 189h1v1h-1zM965 190h1v1h-1zM966 189h1v1h-1zM967 189h1v1h-1zM968 190h1v1h-1zM969 189h1v1h-1zM970 190h1v1h-1zM976 205h1v1h-1zM976 206h1v1h-1zM954 213h1v1h-1zM954 214h1v1h-1zM955 213h1v1h-1zM955 214h1v1h-1zM956 213h1v1h-1zM956 214h1v1h-1zM957 213h1v1h-1zM957 214h1v1h-1zM959 213h1v1h-1zM959 214h1v1h-1zM961 214h1v1h-1zM962 213h1v1h-1zM962 214h1v1h-1zM963 214h1v1h-1zM966 213h1v1h-1zM967 213h1v1h-1zM967 214h1v1h-1zM968 213h1v1h-1zM968 214h1v1h-1zM970 213h1v1h-1zM970 214h1v1h-1zM971 213h1v1h-1zM971 214h1v1h-1zM972 213h1v1h-1zM973 213h1v1h-1zM949 238h1v1h-1zM949 239h1v1h-1zM950 238h1v1h-1zM950 239h1v1h-1zM951 238h1v1h-1zM954 238h1v1h-1zM954 239h1v1h-1zM955 239h1v1h-1zM957 238h1v1h-1zM958 258h1v1h-1zM958 259h1v1h-1zM959 258h1v1h-1zM959 259h1v1h-1zM961 258h1v1h-1zM961 259h1v1h-1zM962 258h1v1h-1zM962 259h1v1h-1zM963 258h1v1h-1zM963 259h1v1h-1zM964 258h1v1h-1zM966 258h1v1h-1zM966 259h1v1h-1zM968 258h1v1h-1zM969 258h1v1h-1zM969 259h1v1h-1zM972 259h1v1h-1zM973 258h1v1h-1zM973 259h1v1h-1zM952 267h1v1h-1zM953 267h1v1h-1zM954 266h1v1h-1zM954 267h1v1h-1zM955 267h1v1h-1zM956 266h1v1h-1zM956 267h1v1h-1zM958 267h1v1h-1zM959 266h1v1h-1zM959 267h1v1h-1zM960 266h1v1h-1zM960 267h1v1h-1zM961 266h1v1h-1zM961 267h1v1h-1zM962 266h1v1h-1zM962 267h1v1h-1zM963 266h1v1h-1zM963 267h1v1h-1zM965 267h1v1h-1zM966 266h1v1h-1zM967 266h1v1h-1zM968 266h1v1h-1zM968 267h1v1h-1zM969 267h1v1h-1zM971 266h1v1h-1zM971 267h1v1h-1zM972 266h1v1h-1zM972 267h1v1h-1zM973 266h1v1h-1zM974 266h1v1h-1zM974 267h1v1h-1zM975 266h1v1h-1zM976 266h1v1h-1zM976 267h1v1h-1zM977 266h1v1h-1zM977 267h1v1h-1zM981 266h1v1h-1zM981 267h1v1h-1zM983 266h1v1h-1zM983 267h1v1h-1zM984 266h1v1h-1zM984 267h1v1h-1zM985 266h1v1h-1zM985 267h1v1h-1zM986 266h1v1h-1zM986 267h1v1h-1zM973 272h1v1h-1zM973 273h1v1h-1zM974 272h1v1h-1zM974 273h1v1h-1zM975 273h1v1h-1zM978 272h1v1h-1zM978 273h1v1h-1zM979 272h1v1h-1zM979 273h1v1h-1zM981 272h1v1h-1zM981 273h1v1h-1zM982 273h1v1h-1zM978 277h1v1h-1zM978 278h1v1h-1zM979 277h1v1h-1zM979 278h1v1h-1zM980 277h1v1h-1zM980 278h1v1h-1zM982 277h1v1h-1zM984 278h1v1h-1zM985 277h1v1h-1zM985 278h1v1h-1zM986 277h1v1h-1zM986 278h1v1h-1zM957 285h1v1h-1zM957 286h1v1h-1zM958 285h1v1h-1zM958 286h1v1h-1zM959 285h1v1h-1zM959 286h1v1h-1zM960 286h1v1h-1zM961 286h1v1h-1zM962 285h1v1h-1zM962 286h1v1h-1zM964 285h1v1h-1zM964 286h1v1h-1zM965 285h1v1h-1zM965 286h1v1h-1zM966 285h1v1h-1zM966 286h1v1h-1zM967 285h1v1h-1zM968 286h1v1h-1zM969 285h1v1h-1zM971 285h1v1h-1zM971 286h1v1h-1zM972 285h1v1h-1zM972 286h1v1h-1zM975 285h1v1h-1zM975 286h1v1h-1zM976 285h1v1h-1zM976 286h1v1h-1zM977 285h1v1h-1zM977 286h1v1h-1zM969 295h1v1h-1zM969 296h1v1h-1zM970 296h1v1h-1zM971 295h1v1h-1zM972 295h1v1h-1zM972 296h1v1h-1zM974 295h1v1h-1zM974 296h1v1h-1zM958 300h1v1h-1zM958 301h1v1h-1zM960 300h1v1h-1zM960 301h1v1h-1zM962 300h1v1h-1zM962 301h1v1h-1zM963 301h1v1h-1zM964 300h1v1h-1zM965 300h1v1h-1zM966 300h1v1h-1zM966 301h1v1h-1zM970 300h1v1h-1zM970 301h1v1h-1zM971 300h1v1h-1zM971 301h1v1h-1zM972 300h1v1h-1zM972 301h1v1h-1zM973 300h1v1h-1zM973 301h1v1h-1zM974 300h1v1h-1zM974 301h1v1h-1zM976 300h1v1h-1zM976 301h1v1h-1zM977 300h1v1h-1zM977 301h1v1h-1zM978 300h1v1h-1zM978 301h1v1h-1zM979 300h1v1h-1zM979 301h1v1h-1zM980 300h1v1h-1zM980 301h1v1h-1zM959 314h1v1h-1zM959 315h1v1h-1zM960 314h1v1h-1zM961 314h1v1h-1zM961 315h1v1h-1zM964 314h1v1h-1zM964 315h1v1h-1zM965 314h1v1h-1zM966 315h1v1h-1zM967 314h1v1h-1zM968 314h1v1h-1zM968 315h1v1h-1zM969 314h1v1h-1zM969 315h1v1h-1zM972 315h1v1h-1zM973 314h1v1h-1zM973 315h1v1h-1zM974 314h1v1h-1zM974 315h1v1h-1zM975 315h1v1h-1zM977 314h1v1h-1zM977 315h1v1h-1zM978 314h1v1h-1zM978 315h1v1h-1zM979 314h1v1h-1zM979 315h1v1h-1zM972 316h1v1h-1zM972 317h1v1h-1zM973 316h1v1h-1zM974 317h1v1h-1zM975 316h1v1h-1zM975 317h1v1h-1zM977 316h1v1h-1zM977 317h1v1h-1zM978 316h1v1h-1zM979 316h1v1h-1zM993 342h1v1h-1zM994 342h1v1h-1zM995 342h1v1h-1zM996 341h1v1h-1zM996 342h1v1h-1zM997 342h1v1h-1zM999 341h1v1h-1zM1000 341h1v1h-1zM1000 342h1v1h-1zM1001 341h1v1h-1zM1001 342h1v1h-1zM1002 341h1v1h-1zM1002 342h1v1h-1zM992 348h1v1h-1zM993 348h1v1h-1zM994 348h1v1h-1zM994 349h1v1h-1zM995 348h1v1h-1zM995 349h1v1h-1zM996 349h1v1h-1zM961 354h1v1h-1zM962 353h1v1h-1zM962 354h1v1h-1zM963 353h1v1h-1zM963 354h1v1h-1zM964 353h1v1h-1zM964 354h1v1h-1zM965 354h1v1h-1zM966 353h1v1h-1zM966 354h1v1h-1zM967 353h1v1h-1zM967 354h1v1h-1zM969 353h1v1h-1zM969 354h1v1h-1zM971 353h1v1h-1zM971 354h1v1h-1zM973 353h1v1h-1zM973 354h1v1h-1zM974 353h1v1h-1zM974 354h1v1h-1zM975 353h1v1h-1zM975 354h1v1h-1zM976 353h1v1h-1zM978 353h1v1h-1zM978 354h1v1h-1zM980 353h1v1h-1zM980 354h1v1h-1zM982 353h1v1h-1zM982 354h1v1h-1zM983 353h1v1h-1zM983 354h1v1h-1zM985 353h1v1h-1zM985 354h1v1h-1zM986 353h1v1h-1zM986 354h1v1h-1zM987 353h1v1h-1zM987 354h1v1h-1zM989 353h1v1h-1zM989 354h1v1h-1zM990 353h1v1h-1zM991 354h1v1h-1zM993 353h1v1h-1zM993 354h1v1h-1zM994 353h1v1h-1zM994 354h1v1h-1zM995 354h1v1h-1zM997 353h1v1h-1zM976 358h1v1h-1zM976 359h1v1h-1zM977 358h1v1h-1zM978 358h1v1h-1zM978 359h1v1h-1zM979 358h1v1h-1zM973 379h1v1h-1zM973 380h1v1h-1zM974 379h1v1h-1zM974 380h1v1h-1zM975 379h1v1h-1zM975 380h1v1h-1zM976 379h1v1h-1zM976 380h1v1h-1zM977 380h1v1h-1zM978 379h1v1h-1zM978 380h1v1h-1zM979 380h1v1h-1zM981 380h1v1h-1zM982 379h1v1h-1zM982 380h1v1h-1zM983 379h1v1h-1zM984 379h1v1h-1zM984 380h1v1h-1zM985 380h1v1h-1zM986 379h1v1h-1zM986 380h1v1h-1zM987 379h1v1h-1zM988 379h1v1h-1zM988 380h1v1h-1zM990 379h1v1h-1zM990 380h1v1h-1zM991 379h1v1h-1zM991 380h1v1h-1zM992 379h1v1h-1zM992 380h1v1h-1zM993 379h1v1h-1zM994 380h1v1h-1zM995 379h1v1h-1zM995 380h1v1h-1zM996 380h1v1h-1zM998 380h1v1h-1zM999 379h1v1h-1zM999 380h1v1h-1zM971 402h1v1h-1zM951 408h1v1h-1zM953 408h1v1h-1zM953 409h1v1h-1zM954 408h1v1h-1zM954 409h1v1h-1zM955 408h1v1h-1zM955 409h1v1h-1zM956 409h1v1h-1zM958 408h1v1h-1zM958 409h1v1h-1zM959 408h1v1h-1zM959 409h1v1h-1zM960 408h1v1h-1zM960 409h1v1h-1zM961 408h1v1h-1zM961 409h1v1h-1zM951 414h1v1h-1zM951 415h1v1h-1zM952 415h1v1h-1zM953 414h1v1h-1zM954 415h1v1h-1zM955 414h1v1h-1zM951 418h1v1h-1zM952 418h1v1h-1zM952 419h1v1h-1zM953 418h1v1h-1zM953 419h1v1h-1zM954 418h1v1h-1zM954 419h1v1h-1zM955 418h1v1h-1zM955 419h1v1h-1zM956 418h1v1h-1zM956 419h1v1h-1zM957 418h1v1h-1zM957 419h1v1h-1zM958 418h1v1h-1zM958 419h1v1h-1zM960 418h1v1h-1zM961 418h1v1h-1z" fill="#2f962f"/></g>
<rect x="930" y="390" width="75" height="2" fill="#0000d8"/>
<!-- h scroll -->
<rect x="32.5" y="483.5" width="59" height="16" fill="#fcfcfc" stroke="#c6cdd9" stroke-width="1"/>
<path d="M83 491 H89 L86 494 Z" fill="#1e1e1e"/>
<path d="M103 487 L98 491.5 L103 496 Z" fill="#868999"/>
<rect x="109" y="487" width="580" height="9" fill="#c2c3c9"/>
<path d="M919 486 L924 491 L919 496 Z" fill="#868999"/>
</svg>
<div class="t" style="left:35px;top:486px">100 %</div>

<!-- error list -->
<div class="a" style="left:31px;top:500px;width:975px;height:7px;background:#35496b"></div>
<div class="a" style="left:31px;top:507px;width:975px;height:171px;background:#4d6082;border:1px solid #94a3c0"></div>
<div class="a" style="left:32px;top:529px;width:973px;height:26px;background:#cfd6e5"></div>
<div class="a" style="left:32px;top:555px;width:973px;height:22px;background:#f6f6f6;border-bottom:2px solid #dcdfe6"></div>
<div class="a" style="left:32px;top:577px;width:973px;height:84px;background:#fff"></div>
<div class="a" style="left:32px;top:610px;width:973px;height:20px;background:#cccedb"></div>
<div class="a" style="left:32px;top:661px;width:973px;height:16px;background:#e8e8ec"></div>



<!-- ===== ERROR LIST CONTENT ===== -->
<div class="t" style="left:36px;top:513px;color:#fff">Error List</div>
<svg style="left:0;top:500px" width="1010" height="210" viewBox="0 500 1010 210">
<path d="M957 515.5 H964 L960.5 519.5 Z" fill="#e8ebf2"/>
<g stroke="#e8ebf2" stroke-width="1.3" fill="none"><path d="M974 522 H981 M977.5 522 V527 M975.5 514.5 V522 M979.5 514.5 V522 M975 514.5 H980"/></g>
<path d="M990 514 L999 523 M999 514 L990 523" stroke="#e8ebf2" stroke-width="1.4"/>
<!-- combo -->
<rect x="39.5" y="533.5" width="149" height="18" fill="#fff" stroke="#cccedb"/>
<path d="M178 541 H184 L181 544 Z" fill="#1e1e1e"/>
<rect x="195" y="534" width="1" height="17" fill="#99a1b3"/>
<rect x="200.5" y="532.5" width="64" height="20" fill="#fffcf4" stroke="#4d6082"/>
<circle cx="211" cy="542" r="7" fill="#e51400"/>
<path d="M207.8 538.8 L214.2 545.2 M214.2 538.8 L207.8 545.2" stroke="#fff" stroke-width="2"/>
<rect x="268" y="534" width="1" height="17" fill="#99a1b3"/>
<rect x="273.5" y="532.5" width="84" height="20" fill="#fffcf4" stroke="#4d6082"/>
<path d="M284 535 L291.5 549 H276.5 Z" fill="#ffcc00" stroke="#ffcc00" stroke-width="1" stroke-linejoin="round"/>
<rect x="283.2" y="539" width="1.8" height="6" fill="#1e1e1e"/><rect x="283.2" y="546" width="1.8" height="1.8" fill="#1e1e1e"/>
<rect x="361" y="534" width="1" height="17" fill="#99a1b3"/>
<circle cx="377" cy="542" r="7.3" fill="#1ba1e2"/>
<rect x="376" y="540" width="2.2" height="6" fill="#fff"/><rect x="376" y="536.8" width="2.2" height="2" fill="#fff"/>
<rect x="460.5" y="534" width="1" height="17" fill="#99a1b3"/>
<rect x="465.5" y="532.5" width="21" height="20" fill="#fcfcfc" stroke="#4d6082"/>
<path d="M469 536 L474 541 M474 536 L469 541" stroke="#e51400" stroke-width="1.6"/>
<path d="M472 540 H483 L479 545 V550 L476 549 V545 Z" fill="#1e1e1e"/>
<rect x="490" y="534" width="1" height="17" fill="#99a1b3"/>
<rect x="498.5" y="533.5" width="149" height="18" fill="#fff" stroke="#cccedb"/>
<path d="M637 541 H643 L640 544 Z" fill="#1e1e1e"/>
<rect x="806.5" y="532.5" width="198" height="19" fill="#fff" stroke="#cccedb"/>
<circle cx="986.5" cy="538.5" r="3.5" fill="none" stroke="#424242" stroke-width="1.5"/>
<path d="M984 541 L979.5 545.5" stroke="#424242" stroke-width="2"/>
<path d="M995 541 H1000 L997.5 543.5 Z" fill="#424242"/>
<!-- header -->
<g fill="#e0e2ea">
<rect x="59" y="556" width="1" height="19"/><rect x="85" y="556" width="1" height="19"/><rect x="135" y="556" width="1" height="19"/>
<rect x="699" y="556" width="1" height="19"/><rect x="849" y="556" width="1" height="19"/><rect x="998" y="556" width="1" height="19"/>
</g>
<g fill="#1e1e1e"><rect x="75" y="558" width="3" height="1"/><rect x="78" y="558" width="1" height="5"/><rect x="80" y="558" width="1" height="5"/><rect x="78" y="560" width="3" height="1"/><rect x="78" y="562" width="3" height="1"/></g>
<!-- row icons -->
<circle cx="71" cy="593" r="7" fill="#e51400"/>
<path d="M67.8 589.8 L74.2 596.2 M74.2 589.8 L67.8 596.2" stroke="#fff" stroke-width="2"/>
<path d="M71 613.5 L78.3 627 H63.7 Z" fill="#ffcc00" stroke="#ffcc00" stroke-width="1" stroke-linejoin="round"/>
<rect x="70.1" y="617" width="1.8" height="6" fill="#1e1e1e"/><rect x="70.1" y="624" width="1.8" height="1.8" fill="#1e1e1e"/>
<rect x="85" y="626" width="32" height="1" fill="#0e70c0"/>
<!-- h scroll -->
<path d="M44 664 L39 669 L44 674 Z" fill="#868999"/>
<rect x="49" y="665" width="808" height="9" fill="#c2c3c9"/>
<path d="M993 664 L998 669 L993 674 Z" fill="#868999"/>
<!-- tabs -->
<rect x="32" y="677" width="56" height="21" fill="#fff"/>
<rect x="88" y="677" width="75" height="21" fill="#4d6082"/>
<rect x="163" y="677" width="50" height="21" fill="#4d6082"/>
<rect x="162" y="677" width="1" height="21" fill="#3f5174"/>
<rect x="31" y="677" width="1" height="22" fill="#94a3c0"/>
<rect x="31" y="698" width="57" height="1" fill="#94a3c0"/>
</svg>
<div class="t" style="left:43px;top:537px">Entire Solution</div>
<div class="t" style="left:223px;top:537px">1 Error</div>
<div class="t" style="left:296px;top:537px">1 Warning</div>
<div class="t" style="left:389px;top:537px">0 Messages</div>
<div class="t" style="left:502px;top:537px">Build + IntelliSense</div>
<div class="t" style="left:810px;top:536px;color:#717171">Search Error List</div>
<div class="t" style="left:89px;top:560px">Code</div>
<div class="t" style="left:139px;top:560px">Description</div>
<div class="t" style="left:703px;top:560px">Project</div>
<div class="t" style="left:853px;top:560px">File</div>
<div class="a" style="left:1000px;top:555px;width:5px;height:20px;overflow:hidden"><div class="t" style="left:2px;top:4px">L</div></div>
<div class="t" style="left:86px;top:588px;color:#0e70c0;letter-spacing:-0.8px">C4996</div>
<div class="t" style="left:135px;top:580px">'kbhit': The POSIX name for this item is deprecated. Instead, use the ISO C and C++ conformant name:</div>
<div class="t" style="left:135px;top:595px">_kbhit. See online help for details.</div>
<div class="t" style="left:699px;top:588px">game_cpp</div>
<div class="t" style="left:849px;top:588px">snake.cpp</div>
<div class="a" style="left:998px;top:584px;width:7px;height:20px;overflow:hidden"><div class="t" style="left:1px;top:4px">1</div></div>
<div class="t" style="left:86px;top:615px;color:#0e70c0;letter-spacing:-0.8px">C4244</div>
<div class="t" style="left:135px;top:615px">'argument': conversion from 'time_t' to 'unsigned int', possible loss of data</div>
<div class="t" style="left:699px;top:615px">game_cpp</div>
<div class="t" style="left:849px;top:615px">snake.cpp</div>
<div class="a" style="left:998px;top:611px;width:7px;height:18px;overflow:hidden"><div class="t" style="left:1px;top:4px">1</div></div>
<div class="t" style="left:37px;top:683px">Error List</div>
<div class="t" style="left:95px;top:683px;color:#fff">Breakpoints</div>
<div class="t" style="left:169px;top:683px;color:#fff">Output</div>

<!-- solution explorer -->
<div class="a" style="left:1006px;top:106px;width:6px;height:571px;background:#314363"></div>
<div class="a" style="left:1012px;top:332px;width:348px;height:27px;background:#35496b"></div>
<div class="a" style="left:1012px;top:85px;width:348px;height:248px;background:#4d6082;border:1px solid #94a3c0"></div>
<div class="a" style="left:1013px;top:107px;width:345px;height:28px;background:#cfd6e5"></div>
<div class="a" style="left:1013px;top:135px;width:345px;height:22px;background:#fcfcfc;border-bottom:2px solid #cccedb"></div>
<div class="a" style="left:1013px;top:157px;width:345px;height:175px;background:#fff"></div>


<!-- ===== SOLUTION EXPLORER CONTENT ===== -->
<div class="t" style="left:1017px;top:91px;color:#fff">Solution Explorer</div>
<div class="a" style="left:1013px;top:304px;width:329px;height:18px;background:#cccedb"></div>
<svg style="left:1000px;top:80px" width="366" height="290" viewBox="1000 80 366 290">
<path d="M1311.5 93.5 H1319 L1315.25 97.5 Z" fill="#e8ebf2"/>
<g stroke="#e8ebf2" stroke-width="1.3" fill="none"><path d="M1328 98.5 H1335.5 M1331.75 98.5 V103 M1329.5 91.5 V98.5 M1334 91.5 V98.5 M1329 91.5 H1334.5"/></g>
<path d="M1344 92 L1353 101 M1353 92 L1344 101" stroke="#e8ebf2" stroke-width="1.4"/>
<!-- toolbar -->
<circle cx="1028" cy="121" r="6" fill="#b3b8c4"/><path d="M1024.5 121 H1031.5 M1027 118 L1024.3 121 L1027 124" fill="none" stroke="#e6e9ef" stroke-width="1.6"/>
<circle cx="1050" cy="121" r="6" fill="#b3b8c4"/><path d="M1046.5 121 H1053.5 M1051 118 L1053.7 121 L1051 124" fill="none" stroke="#e6e9ef" stroke-width="1.6"/>
<path d="M1065.5 121.5 L1072 115 L1078.5 121.5 M1067.5 120 V127.5 H1076.5 V120 M1076 115 V119" fill="none" stroke="#1e1e1e" stroke-width="1.3"/>
<rect x="1070.5" y="122" width="3" height="5.5" fill="#1e1e1e"/>
<path d="M1093 117 H1097 L1098 115.5 H1102 V125 H1093 Z" fill="#dcb067"/>
<rect x="1088.5" y="119.5" width="9" height="7.5" fill="#cfd6e5" stroke="#1e1e1e" stroke-width="1.2"/>
<rect x="1088.5" y="119.5" width="9" height="2" fill="#1e1e1e"/>
<path d="M1089 117.5 Q1089 115 1092 115 M1091 113.5 L1092.5 115 L1091 116.5" fill="none" stroke="#00539c" stroke-width="1.2"/>
<path d="M1101 125.5 Q1101 128 1098 128 M1099 126.5 L1097.5 128 L1099 129.5" fill="none" stroke="#00539c" stroke-width="1.2"/>
<path d="M1109.5 121 H1115.5 L1112.5 124 Z" fill="#1e1e1e"/>
<rect x="1121" y="111" width="1" height="20" fill="#99a1b3"/>
<circle cx="1139" cy="122" r="4.8" fill="none" stroke="#1e1e1e" stroke-width="1.2"/>
<path d="M1139 119 V122.5 H1141.5" fill="none" stroke="#1e1e1e" stroke-width="1.1"/>
<path d="M1132 114 H1137 L1134.5 116.5 Z M1134 116 V119" fill="#1e1e1e" stroke="#1e1e1e" stroke-width="0.8"/>
<path d="M1152.5 121 H1158.5 L1155.5 124 Z" fill="#1e1e1e"/>
<path d="M1166.5 119 H1177 M1169.5 116 L1166.5 119 L1169.5 122 M1177 124.5 H1166.5 M1174 121.5 L1177 124.5 L1174 127.5" fill="none" stroke="#1e1e1e" stroke-width="1.5"/>
<rect x="1189.5" y="119.5" width="6" height="6" fill="#cfd6e5" stroke="#1e1e1e" stroke-width="1.2"/>
<path d="M1191.5 119 V117.5 H1197.5 V123.5 H1196 M1193.5 117 V115.5 H1199.5 V121.5 H1198" fill="none" stroke="#1e1e1e" stroke-width="1.1"/>
<rect x="1191" y="122" width="3" height="1.2" fill="#00539c"/>
<path d="M1210 121 V114.8 H1213 M1211.5 125.5 H1210 M1215 116.5 H1219 L1222.5 120 V125.5 H1221" fill="none" stroke="#1e1e1e" stroke-width="1.1"/>
<path d="M1213.5 118.5 H1218 L1220.5 121 V127.5 H1213.5 Z" fill="#cfd6e5" stroke="#1e1e1e" stroke-width="1"/>
<g fill="#1e1e1e"><rect x="1215" y="121" width="4" height="1"/><rect x="1215" y="123" width="4" height="1"/><rect x="1215" y="125" width="4" height="1"/></g>
<rect x="1230" y="111" width="1" height="20" fill="#99a1b3"/>
<path d="M1245 116.5 L1240.5 120.5 L1245 124.5 M1247 116.5 L1251.5 120.5 L1247 124.5" fill="none" stroke="#1e1e1e" stroke-width="1.6"/>
<path d="M1262.5 126.5 L1268.5 120.5" stroke="#2a2a2a" stroke-width="3.2" stroke-linecap="round"/>
<circle cx="1271" cy="118" r="4.3" fill="#2a2a2a"/>
<path d="M1271.5 116.5 L1275.5 112.5" stroke="#cfd6e5" stroke-width="2.4"/>
<rect x="1279.5" y="109.5" width="21" height="23" fill="#fffcf4" stroke="#4d6082"/>
<rect x="1290" y="119" width="7" height="4" fill="#1e1e1e"/><rect x="1283" y="121.8" width="8" height="1.2" fill="#1e1e1e"/>
<circle cx="1339.5" cy="142.5" r="3.5" fill="none" stroke="#424242" stroke-width="1.5"/>
<path d="M1337 145 L1332.5 149.5" stroke="#424242" stroke-width="2"/>
<path d="M1349 145 H1355 L1352 147.5 Z" fill="#424242"/>
<!-- tree -->
<path d="M1024 173 H1030 V167 Z" fill="#1e1e1e"/>
<rect x="1044.6" y="164.6" width="13" height="11" fill="#fff" stroke="#963ca0" stroke-width="1.2"/>
<path d="M1046.2 167.9 H1051.6 M1048.9 165.2 V170.6 M1050.3 171.9 H1055.7 M1053 169.2 V174.6" stroke="#1e1e1e" stroke-width="1.6"/>
<g fill="none" stroke="#1e1e1e" stroke-width="1">
<path d="M1042.5 183.5 L1046.5 187.5 L1042.5 191.5 Z"/>
<path d="M1042.5 201.5 L1046.5 205.5 L1042.5 209.5 Z"/>
<path d="M1060.5 237.5 L1064.5 241.5 L1060.5 245.5 Z"/>
<path d="M1060.5 291.5 L1064.5 295.5 L1060.5 299.5 Z"/>
<path d="M1060.5 309.5 L1064.5 313.5 L1060.5 317.5 Z"/>
</g>
<path d="M1042 227 H1048 V221 Z" fill="#1e1e1e"/>
<path d="M1042 281 H1048 V275 Z" fill="#1e1e1e"/>
<!-- refs icon -->
<rect x="1062" y="185.5" width="4" height="4" fill="#424242"/><rect x="1067" y="187" width="2" height="1" fill="#424242"/><rect x="1070" y="184" width="6" height="7" fill="#424242"/>
<!-- ext deps -->
<path d="M1063 201 H1068 L1069 200 H1076 V212 H1063 Z" fill="#dcb67a"/>
<rect x="1063" y="202" width="13" height="1" fill="#f0dcb8"/>
<rect x="1069.5" y="206.5" width="7" height="7" fill="#fff" stroke="#1ba1e2" stroke-width="1.2"/>
<path d="M1071.5 211.5 L1074.5 208.5 M1072 208.5 H1074.5 V211" fill="none" stroke="#1ba1e2" stroke-width="1"/>
<!-- header files folder open -->
<path d="M1063 220 H1068 L1069 219 H1076 V230 H1063 Z" fill="#dcb67a"/>
<path d="M1064 221 H1075 V224 L1069 224 L1067 228 H1064 Z" fill="#f3eee6"/>
<path d="M1062 228 H1066.5 L1064.3 230 V232 Z" fill="#1e1e1e"/>
<!-- h file -->
<path d="M1082.5 236.5 H1089 L1092.5 240 V248.5 H1082.5 Z" fill="#fff" stroke="#424242" stroke-width="1"/>
<path d="M1085.5 240 V246 M1085.5 243 H1088.5 V246" fill="none" stroke="#963ca0" stroke-width="1.2"/>
<!-- resource folder -->
<path d="M1063 256 H1068 L1069 255 H1076 V266 H1063 Z" fill="#dcb67a"/>
<rect x="1069" y="256" width="7" height="1" fill="#f0dcb8"/>
<path d="M1062 264 H1066.5 L1064.3 266 V268 Z" fill="#1e1e1e"/>
<!-- source folder -->
<path d="M1063 274 H1068 L1069 273 H1076 V284 H1063 Z" fill="#dcb67a"/>
<path d="M1064 275 H1075 V278 L1069 278 L1067 282 H1064 Z" fill="#f3eee6"/>
<path d="M1062 282 H1066.5 L1064.3 284 V286 Z" fill="#1e1e1e"/>
<!-- cpp icons -->
<g stroke="#963ca0" stroke-width="1.8">
<path d="M1081 294.5 H1087 M1084 291.5 V297.5 M1087 297 H1093 M1090 294 V300"/>
<path d="M1081 312.5 H1087 M1084 309.5 V315.5 M1087 315 H1093 M1090 312 V318"/>
</g>
<!-- scrollbar -->
<rect x="1342" y="157" width="16" height="175" fill="#e8e8ec"/>
<path d="M1345.5 171 L1350 166.5 L1354.5 171 Z" fill="#868999"/>
<rect x="1346" y="191" width="9" height="124" fill="#c2c3c9"/>
<path d="M1345.5 321 H1354.5 L1350 325.5 Z" fill="#868999"/>
<!-- tabs -->
<rect x="1012" y="333" width="348" height="20" fill="#35496b"/>
<rect x="1012" y="332" width="1" height="21" fill="#94a3c0"/>
<rect x="1013" y="332" width="99" height="20" fill="#fff"/>
<rect x="1012" y="352" width="100" height="1" fill="#94a3c0"/>
<rect x="1112" y="333" width="87" height="19" fill="#4d6082"/>
</svg>
<div class="t" style="left:1018px;top:140px;color:#717171;letter-spacing:-0.2px">Search Solution Explorer (Ctrl+;)</div>
<div class="t" style="left:1064px;top:164px;font-weight:bold;letter-spacing:-0.4px">game_cpp</div>
<div class="t" style="left:1082px;top:182px;letter-spacing:-0.3px">References</div>
<div class="t" style="left:1082px;top:200px;letter-spacing:-0.3px">External Dependencies</div>
<div class="t" style="left:1082px;top:218px;letter-spacing:-0.3px">Header Files</div>
<div class="t" style="left:1100px;top:236px;letter-spacing:-0.3px">console.h</div>
<div class="t" style="left:1082px;top:254px;letter-spacing:-0.3px">Resource Files</div>
<div class="t" style="left:1082px;top:272px;letter-spacing:-0.3px">Source Files</div>
<div class="t" style="left:1100px;top:290px;letter-spacing:-0.3px">console.cpp</div>
<div class="t" style="left:1100px;top:308px;letter-spacing:-0.3px">Snake.cpp</div>
<div class="t" style="left:1018px;top:336px">Solution Explorer</div>
<div class="t" style="left:1119px;top:337px;color:#fff">Team Explorer</div>

<!-- properties -->
<div class="a" style="left:1012px;top:359px;width:348px;height:340px;background:#4d6082;border:1px solid #94a3c0"></div>
<div class="a" style="left:1013px;top:381px;width:346px;height:317px;background:#fff"></div>

<!-- status bar -->
<div class="a" style="left:0;top:705px;width:1366px;height:23px;background:#007acc"></div>
<div class="a" style="left:24px;top:705px;width:564px;height:23px;background:#005a9e"></div>
<!-- taskbar -->
<div class="a" style="left:0;top:728px;width:1366px;height:40px;background:#121416"></div>

<!-- ===== PROPERTIES CONTENT ===== -->
<div class="t" style="left:1017px;top:365px;color:#fff">Properties</div>
<svg style="left:1000px;top:355px" width="366" height="355" viewBox="1000 355 366 355">
<path d="M1311.5 368.5 H1319 L1315.25 372.5 Z" fill="#e8ebf2"/>
<g stroke="#e8ebf2" stroke-width="1.3" fill="none"><path d="M1328 373.5 H1335.5 M1331.75 373.5 V378 M1329.5 366.5 V373.5 M1334 366.5 V373.5 M1329 366.5 H1334.5"/></g>
<path d="M1344 367 L1353 376 M1353 367 L1344 376" stroke="#e8ebf2" stroke-width="1.4"/>
<rect x="1013" y="381" width="345" height="25" fill="#fcfcfc"/>
<path d="M1348 392 H1354 L1351 395 Z" fill="#1e1e1e"/>
<rect x="1013" y="406" width="345" height="25" fill="#cfd6e5"/>
<rect x="1016.5" y="407.5" width="22" height="21" fill="#fffcf4" stroke="#4d6082"/>
<g fill="#1e1e1e">
<rect x="1020" y="411" width="5" height="5"/><rect x="1020" y="420" width="5" height="5"/>
<rect x="1026" y="411" width="5" height="1"/><rect x="1026" y="413" width="5" height="1"/><rect x="1026" y="415" width="5" height="1"/><rect x="1026" y="417" width="5" height="1"/><rect x="1026" y="419" width="5" height="1"/>
<rect x="1026" y="422" width="5" height="1"/><rect x="1026" y="424" width="5" height="1"/>
<rect x="1032.5" y="413" width="1.5" height="1"/><rect x="1032.5" y="415" width="1.5" height="1"/><rect x="1032.5" y="417" width="1.5" height="1"/><rect x="1032.5" y="419" width="1.5" height="1"/><rect x="1032.5" y="424" width="1.5" height="1"/>
</g>
<g fill="#fffcf4"><rect x="1022" y="412" width="1" height="3"/><rect x="1021" y="413" width="3" height="1"/><rect x="1022" y="421" width="1" height="3"/><rect x="1021" y="422" width="3" height="1"/></g>
<rect x="1043" y="411" width="7" height="7" fill="#2a2a2a"/>
<text x="1046.5" y="417.2" font-family="Liberation Sans" font-weight="bold" font-size="7" fill="#fff" text-anchor="middle">A</text>
<path d="M1044 420.5 H1049 L1044 425 H1049.5" fill="none" stroke="#2a2a2a" stroke-width="1.5"/>
<path d="M1054 414 V423 M1051.5 420 L1054 423 L1056.5 420" fill="none" stroke="#0033b4" stroke-width="2"/>
<rect x="1065" y="409" width="1" height="20" fill="#99a1b3"/>
<path d="M1073.5 423.5 L1079.5 417.5" stroke="#9a9a9a" stroke-width="3.2" stroke-linecap="round"/>
<circle cx="1082.5" cy="414.5" r="4.2" fill="#9a9a9a"/>
<path d="M1083 413 L1086.5 409.5" stroke="#cfd6e5" stroke-width="2.2"/>
<rect x="1013" y="635" width="345" height="1" fill="#e5e5e5"/>
</svg>
<div class="t" style="left:1073px;top:652px;font-size:20px;color:#c6c6c6">Activate Windows</div>
<div class="t" style="left:1073px;top:678px;font-size:15px;color:#c6c6c6">Go to Settings to activate Windows.</div>

<!-- ===== STATUS BAR ===== -->
<svg style="left:0;top:700px" width="1366" height="68" viewBox="0 700 1366 68">
<path d="M6.5 722.5 L9.5 710.5 H19.5 L16.5 722.5 Z" fill="none" stroke="#fff" stroke-width="1.2"/>
<path d="M1100 713 V722 M1096.5 716.5 L1100 712.5 L1103.5 716.5" fill="none" stroke="#fff" stroke-width="1.6"/>
<path d="M1147 722.5 L1148 719 L1155 712 L1157.5 714.5 L1150.5 721.5 Z" fill="#fff"/>
<path d="M1200 709.5 L1207.5 717 L1200 724.5 L1192.5 717 Z" fill="#fff"/>
<path d="M1198.5 713 L1201.5 716 V720.5 M1201.5 716 L1203.5 718" fill="none" stroke="#007acc" stroke-width="1.2"/>
<g fill="#fff"><circle cx="1275" cy="711" r="2"/><circle cx="1286" cy="711" r="2"/><circle cx="1280.5" cy="723" r="2"/></g>
<path d="M1275 711 Q1275 716 1280.5 718 V723 M1286 711 Q1286 716 1280.5 718" fill="none" stroke="#fff" stroke-width="1.6"/>
<path d="M1338 720 L1341.5 715.5 L1345 720 Z" fill="#fff"/>
<!-- taskbar -->
<g fill="#fff">
<path d="M16.5 741.5 L23 740.6 V747.4 H16.5 Z M24 740.4 L32 739.3 V747.4 H24 Z M16.5 748.4 H23 V755.2 L16.5 754.3 Z M24 748.4 H32 V756.6 L24 755.4 Z"/>
</g>
<circle cx="74.5" cy="745" r="5.8" fill="none" stroke="#fff" stroke-width="1.3"/>
<path d="M70.5 749 L64.5 755" stroke="#fff" stroke-width="1.4"/>
<g fill="none" stroke="#fff" stroke-width="1.3">
<rect x="113.5" y="743.5" width="10" height="8"/><path d="M112 740.5 H125 M112 754.5 H125 M127.5 740 V741.5 M127.5 743 V755"/>
</g>
<!-- edge -->
<path d="M162 746 Q164 737.5 172.5 737.5 Q181.5 737.5 181.5 748 V750.5 H167.5 Q168 755.5 173.5 755.5 Q177.5 755.5 180.5 753.5 V757.5 Q177 759 172 759 Q163 758.5 162.5 750 Q162.5 746 166 743 Q165 746.5 167.5 746.5 H175.5 Q175 741.5 170.5 741.5 Q165 741.5 162 746 Z" fill="#0f78d7"/>
<!-- explorer -->
<path d="M209 740 Q209 738.8 210 738.8 H216 L217.5 740 H230.5 V757 H209 Z" fill="#f7d774"/>
<rect x="209" y="742" width="21.5" height="15" fill="#ffe38f"/>
<rect x="210" y="739.5" width="5" height="1.5" fill="#4aa6e8"/>
<path d="M213 757.5 V751.5 Q213 749 215.5 749 H224.5 Q227 749 227 751.5 V757.5 H223 V753 H217 V757.5 Z" fill="#35a9e8"/>
<rect x="200" y="766" width="40" height="2" fill="#76b9ed"/>
<!-- store -->
<path d="M257 742.5 H280 V758 Q280 759.3 278.7 759.3 H258.3 Q257 759.3 257 758 Z" fill="#fff"/>
<path d="M263 742.5 V740.5 Q263 736 268.5 736 Q274 736 274 740.5 V742.5" fill="none" stroke="#fff" stroke-width="1.5"/>
<rect x="263" y="745" width="5" height="5" fill="#f25022"/><rect x="269" y="745" width="5" height="5" fill="#7fba00"/>
<rect x="263" y="751" width="5" height="5" fill="#00a4ef"/><rect x="269" y="751" width="5" height="5" fill="#ffb900"/>
<!-- mail -->
<path d="M305.5 745 L318 738.5 L330.5 745 V757.5 H305.5 Z" fill="#fff"/>
<path d="M306 745.5 L318 752 L330 745.5" fill="none" stroke="#101214" stroke-width="1.2"/>
<path d="M318 752 L330.5 744.6 L321 757.5" fill="#101214"/>
<!-- green app -->
<circle cx="366.7" cy="748" r="12.3" fill="#6aaf46"/>
<circle cx="366.5" cy="749" r="6.5" fill="#fff"/>
<circle cx="366.5" cy="749" r="3" fill="#6aaf46"/>
<path d="M370 742 L377 738 M372 745 L379 743 M368 741 L372 736" stroke="#f26d21" stroke-width="1.6"/>
<rect x="347" y="766" width="40" height="2" fill="#76b9ed"/>
<!-- dashboard -->
<rect x="405" y="739" width="21.5" height="16" fill="#38a2e0"/>
<rect x="406.5" y="740.5" width="18.5" height="13" fill="#cde8f7"/>
<circle cx="412" cy="745.5" r="3.8" fill="#fff" stroke="#2d86c8" stroke-width="1"/>
<path d="M412 745.5 V741.7 A3.8 3.8 0 0 1 415.8 745.5 Z" fill="#f4a31a"/>
<g fill="#2d86c8"><rect x="418" y="742" width="5" height="1.5"/><rect x="418" y="745" width="5" height="1.5"/><rect x="418" y="748" width="5" height="1.5"/><rect x="408" y="751" width="15" height="1.3"/></g>
<rect x="380" y="766" width="8" height="2" fill="#76b9ed"/>
<!-- skype -->
<circle cx="467" cy="746.5" r="10.5" fill="#00a9f0"/>
<circle cx="459.5" cy="739" r="4.5" fill="#00a9f0"/><circle cx="474.5" cy="754" r="4.5" fill="#00a9f0"/>
<text x="467" y="752" font-family="Liberation Sans" font-weight="bold" font-size="16" fill="#fff" text-anchor="middle">S</text>
<circle cx="477.5" cy="754.5" r="7" fill="#2b2b2b" stroke="#d0d0d0" stroke-width="1"/>
<text x="477.5" y="759" font-family="Liberation Sans" font-size="11" fill="#fff" text-anchor="middle">2</text>
<!-- scanner -->
<path d="M503 741 H521 L518 748 H506 Z" fill="#8c8c8c"/>
<rect x="505" y="739" width="14" height="3" fill="#c9c9c9"/>
<rect x="504" y="748" width="16" height="8" fill="#6ab6e0"/>
<rect x="503" y="755" width="18" height="3" fill="#9a9a9a"/>
<rect x="512" y="748" width="13" height="12" fill="#e8e8e8"/>
<g fill="#777"><rect x="514" y="750" width="9" height="1"/><rect x="514" y="752.5" width="9" height="1"/><rect x="514" y="755" width="4" height="3"/><rect x="519" y="755" width="4" height="1"/></g>
<!-- box -->
<rect x="551" y="736" width="24.5" height="24.5" fill="#0e71c5"/>
<text x="563.3" y="752" font-family="Liberation Sans" font-size="10" fill="#fff" text-anchor="middle" letter-spacing="-0.5">box</text>
<!-- sticky -->
<path d="M602.5 738 H621.5 V749.5 L611 758 H602.5 Z" fill="#fff"/>
<path d="M621.5 751 L612.5 758 H621.5 Z" fill="#fff"/>
<rect x="592" y="766" width="40" height="2" fill="#76b9ed"/>
<!-- vs -->
<path d="M667 738.5 L673 741 V755 L667 757.5 L655.5 748.5 L651.5 751.5 L649 750 V745.5 L651.5 744 L655.5 747 Z M667 743 L660.5 748 L667 752.8 Z M651.5 746.5 V749 L653.5 748 Z" fill="#865fc5" fill-rule="evenodd"/>
<rect x="641" y="766" width="40" height="2" fill="#76b9ed"/>
<rect x="686" y="728" width="48" height="40" fill="#3d3f41"/>
<path d="M716 737.5 L722.5 740 V755.5 L716 758 L698 754.5 V754 L716 755.5 Z" fill="#865fc5"/>
<path d="M700.5 742.5 L705 746.5 L712.5 740.5 V752.5 L705 746.5 L700.5 750.5 Z" fill="none" stroke="#865fc5" stroke-width="2.2" stroke-linejoin="round"/>
<rect x="686" y="766" width="48" height="2" fill="#76b9ed"/>
<!-- tray -->
<g fill="none" stroke="#fff" stroke-width="1.2">
<circle cx="1094" cy="744.5" r="2.6"/><path d="M1089.5 753.5 Q1089.5 748 1094 748 Q1098.5 748 1098.5 753.5"/>
<circle cx="1100" cy="740.5" r="2.6"/><path d="M1097.5 745.5 Q1098 744 1100 744 Q1104.5 744 1104.5 749"/>
<path d="M1127.5 751 L1133 745.5 L1138.5 751" stroke-width="1.4"/>
<rect x="1154.5" y="743.5" width="10" height="7"/><path d="M1165 745.5 V748.5"/>
<path d="M1150 745 V748 H1153 V745 Z M1151.5 748 V752 M1150.3 743 V745 M1152.7 743 V745"/>
<path d="M1176 752 A12 12 0 0 1 1188 740 M1179 752 A9 9 0 0 1 1188 743 M1182 752 A6 6 0 0 1 1188 746 M1185 752 A3 3 0 0 1 1188 749"/>
<path d="M1197.5 744.5 H1200.5 L1204.5 740.5 V755.5 L1200.5 751.5 H1197.5 Z"/>
<path d="M1207 745 Q1208.5 748 1207 751 M1209.5 742.5 Q1212 748 1209.5 753.5 M1212 740.5 Q1215.5 748 1212 755.5" stroke="#bbb"/>
</g>
<rect x="1156" y="745" width="7" height="4" fill="#fff"/>
<circle cx="1188" cy="752" r="1.3" fill="#fff"/>
<path d="M1325.5 737 H1344.5 V751 H1336 L1331 755.5 V751 H1325.5 Z" fill="#fff"/>
<g fill="#101214"><rect x="1329" y="740.5" width="12" height="1.2"/><rect x="1329" y="743.5" width="12" height="1.2"/><rect x="1329" y="746.5" width="8" height="1.2"/></g>
<circle cx="1341.5" cy="755" r="7.5" fill="#2b2b2b" stroke="#ddd" stroke-width="1"/>
<text x="1341.5" y="759.5" font-family="Liberation Sans" font-size="11" fill="#fff" text-anchor="middle">1</text>
</svg>
<div class="t" style="left:28px;top:711px;color:#fff">warning C4244: 'argument': conversion from 'time_t' to 'unsigned int', possible loss of data</div>
<div class="t" style="left:606px;top:711px;color:#fff">Ln 184</div>
<div class="t" style="left:698px;top:711px;color:#fff">Col 1</div>
<div class="t" style="left:790px;top:711px;color:#fff">Ch 1</div>
<div class="t" style="left:926px;top:711px;color:#fff">INS</div>
<div class="t" style="left:1115px;top:711px;color:#fff">1</div>
<div class="t" style="left:1164px;top:711px;color:#fff">3</div>
<div class="t" style="left:1215px;top:711px;color:#fff">snake1</div>
<div class="t" style="left:1295px;top:711px;color:#fff">master</div>
<div class="t" style="left:1223px;top:741px;color:#fff">ENG</div>
<div class="t" style="left:1262px;top:733px;color:#fff">4:51 PM</div>
<div class="t" style="left:1260px;top:751px;color:#fff">29/08/18</div>

</body></html>
